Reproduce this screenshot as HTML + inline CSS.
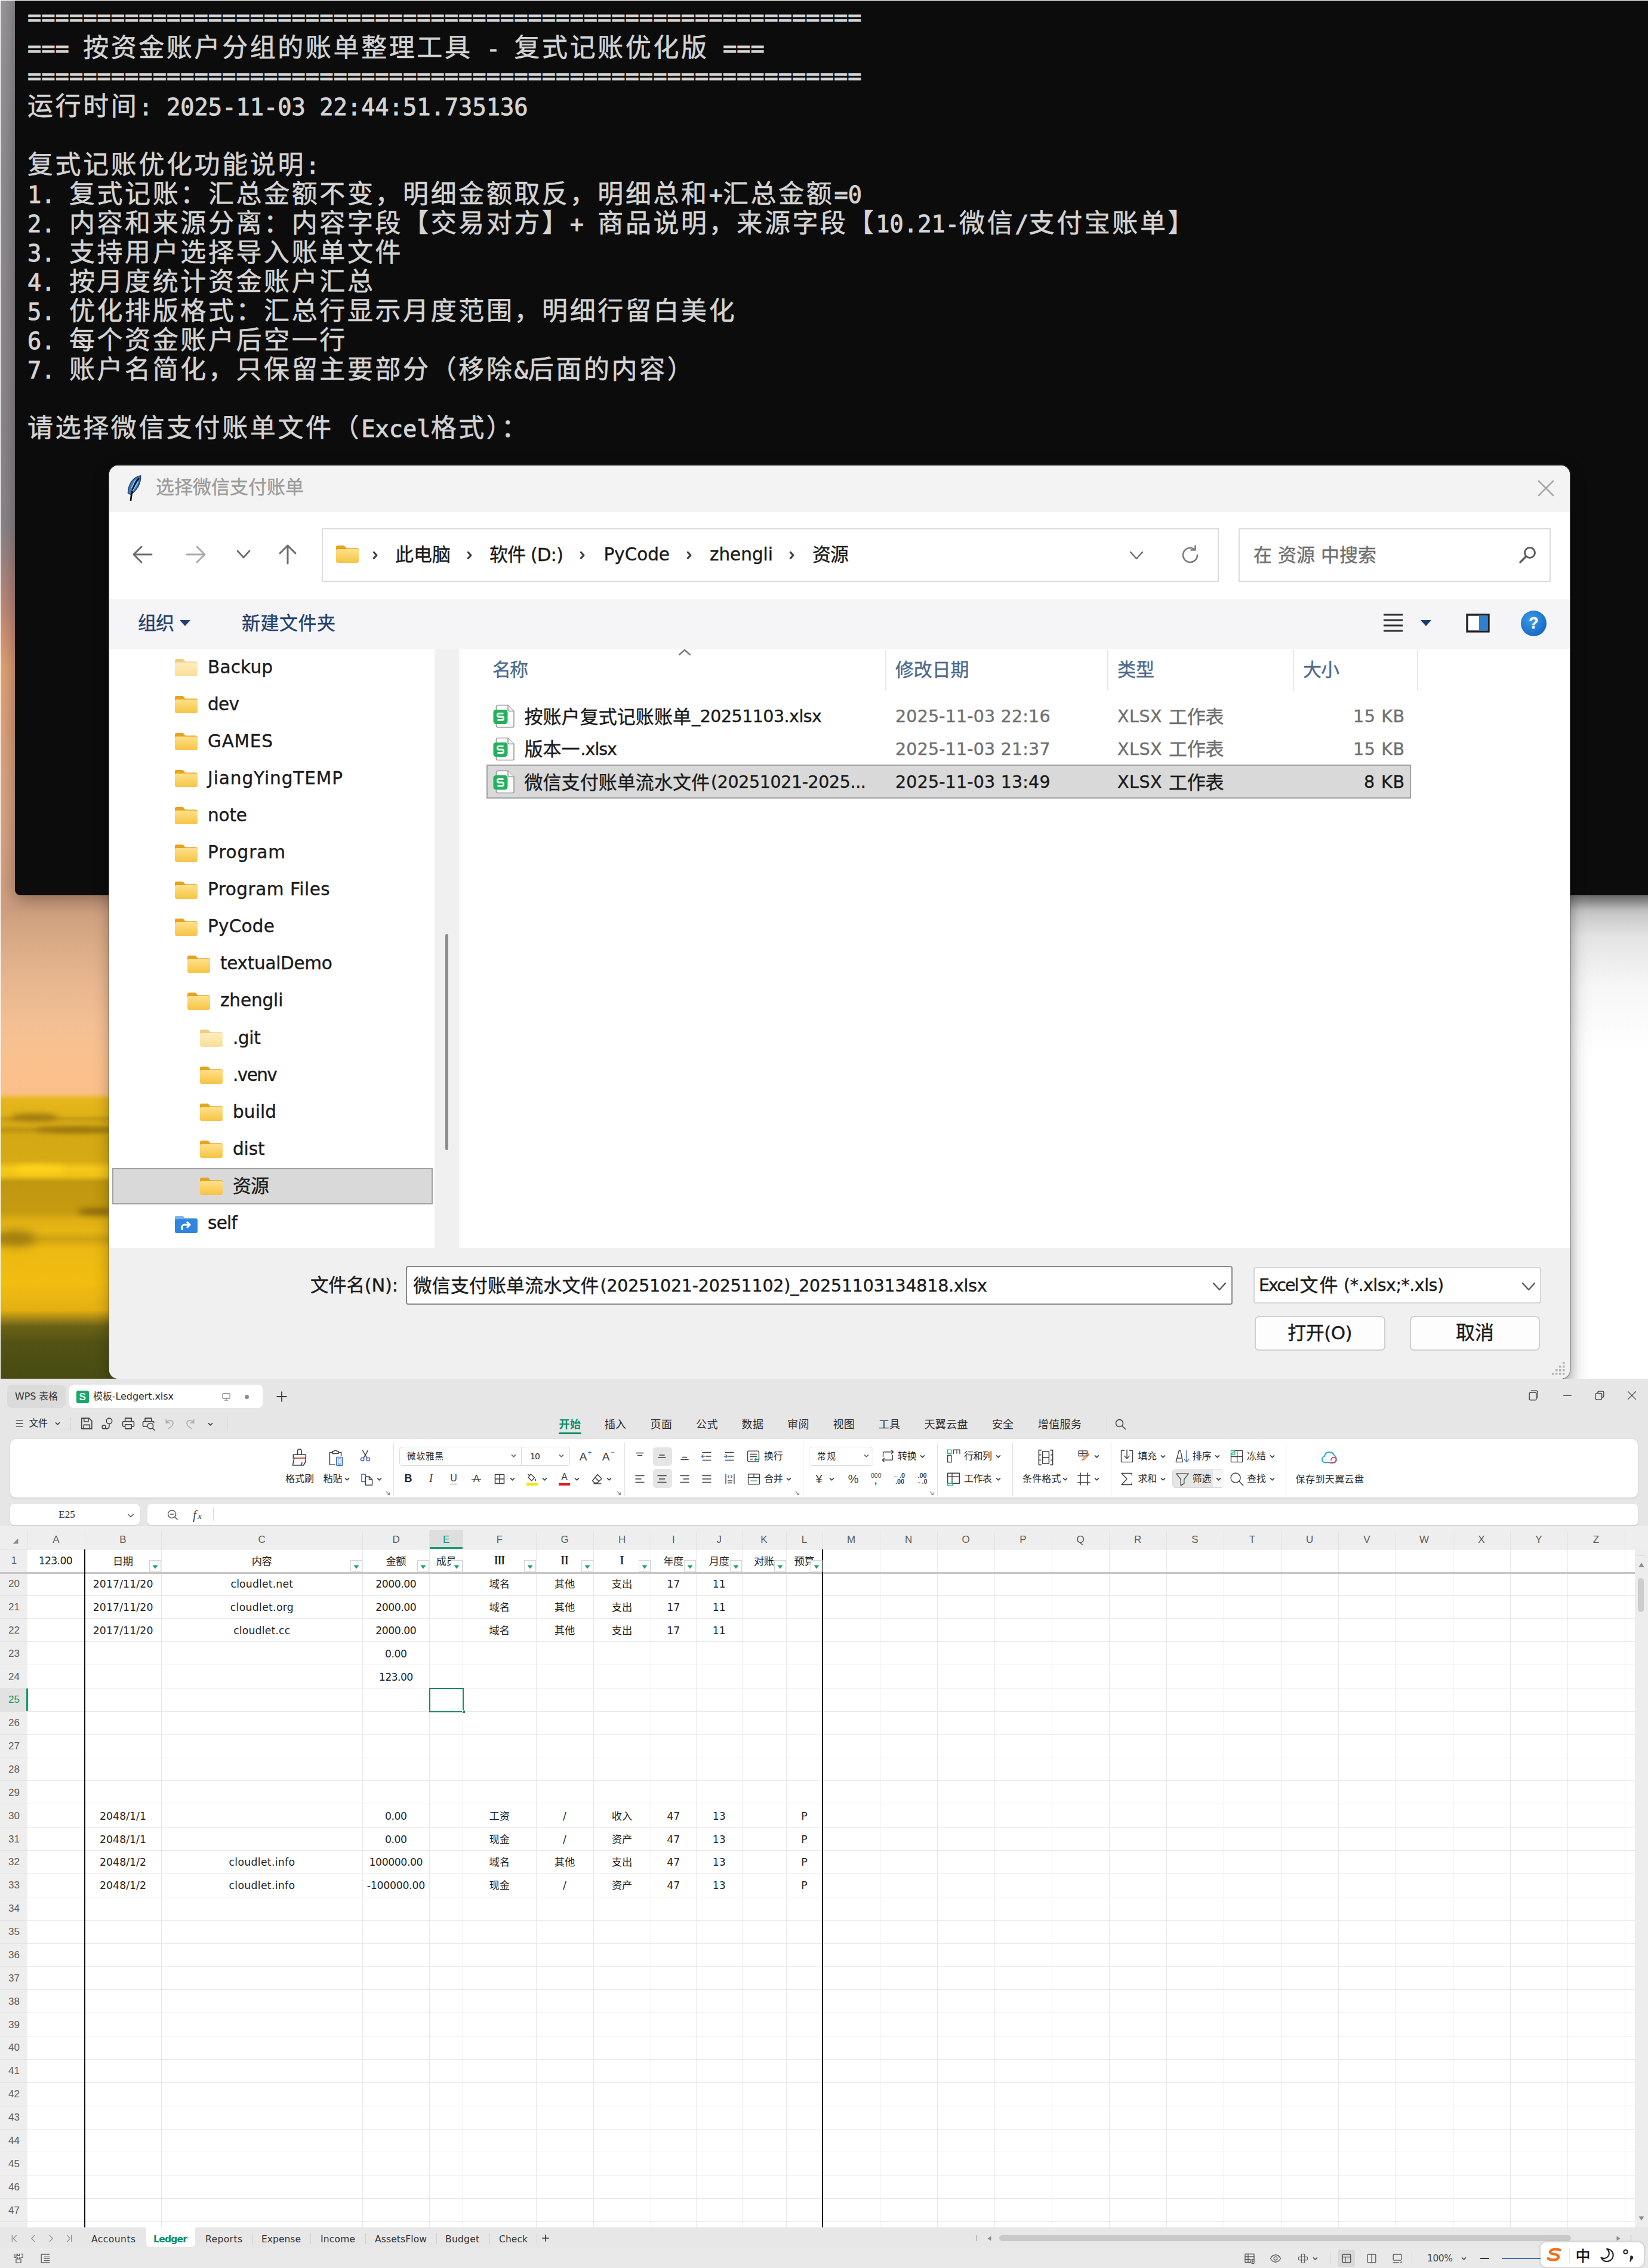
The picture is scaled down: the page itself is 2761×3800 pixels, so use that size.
<!DOCTYPE html><html lang="zh-CN"><head><meta charset="utf-8"><title>screenshot</title><style>html,body{margin:0;padding:0}body{width:2761px;height:3800px;position:relative;overflow:hidden;background:#fff;font-family:"DejaVu Sans","Liberation Sans","Noto Sans CJK SC",sans-serif}
.b{position:absolute;box-sizing:border-box}.t{position:absolute;white-space:pre;display:block}
.term{color:#d4d4d4;-webkit-text-stroke:0.9px #d4d4d4;font-family:"DejaVu Sans Mono","Liberation Mono","Noto Sans CJK SC",monospace;font-size:38.7px}
.tl{position:absolute;left:0;white-space:pre;height:49px;line-height:49px}
.tl i{font-style:normal;font-family:"Noto Sans CJK SC",sans-serif;font-size:43px;letter-spacing:3.6px;-webkit-text-stroke:0.55px #d4d4d4}
</style></head><body>
<div class="b" style="left:0px;top:0px;width:2761px;height:2311px;background:linear-gradient(to bottom,#9a969b 0px,#908c90 300px,#8b8589 880px,#a08581 940px,#b8877b 1000px,#d09275 1060px,#e2a373 1120px,#dea27a 1200px,#dba684 1350px,#d3a081 1480px,#cd9e7e 1520px,#d9ab86 1580px,#e8b78f 1650px,#f4bf92 1720px,#fac18e 1780px,#fbbf8a 1830px,#f3bd60 1836px,#e6b61c 1842px,#e0b218 1868px,#c89c14 1874px,#d8ac16 1884px,#c09410 1893px,#d2a814 1902px,#d6aa14 1945px,#f6c818 1958px,#f0c218 1970px,#c09810 1980px,#c49a10 2030px,#e0b014 2046px,#e6b614 2062px,#cfa212 2076px,#ecb912 2092px,#f1bd10 2150px,#e4b012 2195px,#a88a16 2208px,#6b6216 2222px,#525214 2250px,#484c10 2311px);"></div>
<div class="b" style="left:18px;top:1866px;width:80px;height:12px;background:#9c7810;border-radius:50%;filter:blur(5px)"></div>
<div class="b" style="left:60px;top:1888px;width:130px;height:10px;background:#96740e;border-radius:50%;filter:blur(4px)"></div>
<div class="b" style="left:130px;top:2024px;width:60px;height:12px;background:#8a6a0c;border-radius:50%;filter:blur(5px)"></div>
<div class="b" style="left:-10px;top:2062px;width:70px;height:26px;background:#a07e10;border-radius:50%;filter:blur(8px)"></div>
<div class="b" style="left:20px;top:1952px;width:90px;height:14px;background:#ffd41c;border-radius:50%;filter:blur(6px)"></div>
<div class="b" style="left:2620px;top:1500px;width:141px;height:811px;background:linear-gradient(to bottom,#8a8a8a 0px,#c4c4c4 25px,#e4e4e4 70px,#f6f6f6 150px,#ffffff 260px);"></div>
<div class="b" style="left:2620px;top:1500px;width:50px;height:811px;background:linear-gradient(to right,rgba(120,120,120,.30),rgba(200,200,200,.12) 25px,rgba(255,255,255,0) 50px);"></div>
<div class="b" style="left:25px;top:-20px;width:2756px;height:1520px;background:#0c0c0c;border-radius:9px;box-shadow:0 6px 30px rgba(0,0,0,.38);"></div>
<div class="b term" style="left:46px;top:0;width:2700px;height:760px"><div class="tl" style="top:4.7px">============================================================</div><div class="tl" style="top:51.5px">=== <i>按资金账户分组的账单整理工具</i> - <i>复式记账优化版</i> ===</div><div class="tl" style="top:102.7px">============================================================</div><div class="tl" style="top:149.5px"><i>运行时间</i>: 2025-11-03 22:44:51.735136</div><div class="tl" style="top:247.5px"><i>复式记账优化功能说明</i>:</div><div class="tl" style="top:296.5px">1. <i>复式记账：汇总金额不变，明细金额取反，明细总和</i>+<i>汇总金额</i>=0</div><div class="tl" style="top:345.5px">2. <i>内容和来源分离：内容字段【交易对方】</i>+ <i>商品说明，来源字段【</i>10.21-<i>微信</i>/<i>支付宝账单】</i></div><div class="tl" style="top:394.5px">3. <i>支持用户选择导入账单文件</i></div><div class="tl" style="top:443.5px">4. <i>按月度统计资金账户汇总</i></div><div class="tl" style="top:492.5px">5. <i>优化排版格式：汇总行显示月度范围，明细行留白美化</i></div><div class="tl" style="top:541.5px">6. <i>每个资金账户后空一行</i></div><div class="tl" style="top:590.5px">7. <i>账户名简化，只保留主要部分（移除</i>&amp;<i>后面的内容）</i></div><div class="tl" style="top:688.5px"><i>请选择微信支付账单文件（</i>Excel<i>格式）：</i></div></div>
<div class="b" style="left:183px;top:780px;width:2447px;height:1530px;border-radius:15px;background:#fff;box-shadow:0 0 0 1.5px rgba(90,90,90,.5),0 6px 26px rgba(0,0,0,.3);overflow:hidden">
<div class="b" style="left:0;top:0;width:2447px;height:78px;background:#f3f3f3"></div>
<div class="b" style="left:0;top:224px;width:2447px;height:84px;background:#f5f5f8"></div>
<div class="b" style="left:0;top:1311px;width:2447px;height:219px;background:#f0f0f0"></div>
<div class="b" style="left:545px;top:308px;width:41px;height:1003px;background:#f0f0f0"></div>
<div class="b" style="left:586px;top:308px;width:4px;height:1003px;background:#fbfbfb"></div>
</div>
<svg class="b" style="left:212px;top:795px;" width="26" height="46" viewBox="0 0 26 46"><path d="M23.500 2C12 4 3 15 2.500 31L7 33.500C17 27 24.500 15 23.500 2z" fill="#3d7fc6" stroke="#24406a" stroke-width="1.600"/><path d="M21 6C13 14 8.500 26 7 44" fill="none" stroke="#0b1424" stroke-width="2.800"/><path d="M15 9L8 23M19 13L10 28" stroke="#a9ccf0" stroke-width="1.400" fill="none"/></svg>
<span class="t" style="left:261.0px;top:795.0px;height:43px;line-height:43px;font-size:31px;color:#9b9b9b;-webkit-text-stroke:.4px;">选择微信支付账单</span>
<svg class="b" style="left:2576px;top:804px;" width="28" height="28" viewBox="0 0 28 28"><path d="M2 2L26 26M26 2L2 26" stroke="#a9a9a9" stroke-width="2.600" stroke-linecap="round"/></svg>
<svg class="b" style="left:221px;top:913px;" width="36" height="32" viewBox="0 0 36 32"><path d="M33 16H4M16 3L3 16L16 29" fill="none" stroke="#6c6c6c" stroke-width="3" stroke-linecap="round" stroke-linejoin="round"/></svg>
<svg class="b" style="left:310px;top:913px;" width="36" height="32" viewBox="0 0 36 32"><path d="M3 16H32M20 3L33 16L20 29" fill="none" stroke="#ababab" stroke-width="3" stroke-linecap="round" stroke-linejoin="round"/></svg>
<svg class="b" style="left:394.5px;top:919.5px;" width="26" height="17" viewBox="0 0 26 17"><path d="M3 3L13 14L23 3" fill="none" stroke="#6c6c6c" stroke-width="2.8" stroke-linecap="round" stroke-linejoin="round"/></svg>
<svg class="b" style="left:466px;top:911px;" width="32" height="36" viewBox="0 0 32 36"><path d="M16 33V4M3 16L16 3L29 16" fill="none" stroke="#6c6c6c" stroke-width="3" stroke-linecap="round" stroke-linejoin="round"/></svg>
<div class="b" style="left:539px;top:885px;width:1503px;height:90px;background:#fff;border:2px solid #dcdcdc;"></div>
<svg class="b" style="left:561px;top:911px;" width="42" height="34" viewBox="0 0 42 34"><linearGradient id="fg" x1="0" y1="0" x2="0" y2="1"><stop offset="0" stop-color="#ffe08a"/><stop offset="1" stop-color="#f6c443"/></linearGradient><path d="M2 6a3 3 0 0 1 3-3h10.5l4 4.5H37a3 3 0 0 1 3 3V12H2z" fill="#e5a320"/><path d="M2 11.5a2.5 2.5 0 0 1 2.5-2.5H37.500a2.500 2.500 0 0 1 2.500 2.500V29a3 3 0 0 1-3 3H5a3 3 0 0 1-3-3z" fill="url(#fg)"/></svg>
<svg class="b" style="left:624.4px;top:922.64px;" width="9.2" height="14.72" viewBox="0 0 9.2 14.72"><path d="M2.3 2.3L6.9 7.36L2.3 12.42" fill="none" stroke="#3f3f3f" stroke-width="3.1" stroke-linecap="round" stroke-linejoin="round"/></svg>
<span class="t" style="left:662.0px;top:907.5px;height:43px;line-height:43px;font-size:31px;color:#1b1b1b;-webkit-text-stroke:.4px;">此电脑</span>
<svg class="b" style="left:782.4px;top:922.64px;" width="9.2" height="14.72" viewBox="0 0 9.2 14.72"><path d="M2.3 2.3L6.9 7.36L2.3 12.42" fill="none" stroke="#3f3f3f" stroke-width="3.1" stroke-linecap="round" stroke-linejoin="round"/></svg>
<span class="t" style="left:820.0px;top:907.5px;height:43px;line-height:43px;font-size:31px;color:#1b1b1b;letter-spacing:-1.06px;-webkit-text-stroke:.4px;">软件 (D:)</span>
<svg class="b" style="left:971.4px;top:922.64px;" width="9.2" height="14.72" viewBox="0 0 9.2 14.72"><path d="M2.3 2.3L6.9 7.36L2.3 12.42" fill="none" stroke="#3f3f3f" stroke-width="3.1" stroke-linecap="round" stroke-linejoin="round"/></svg>
<span class="t" style="left:1011.5px;top:908.5px;height:41px;line-height:41px;font-size:29.5px;color:#1b1b1b;letter-spacing:-0.06px;-webkit-text-stroke:.4px;">PyCode</span>
<svg class="b" style="left:1150.4px;top:922.64px;" width="9.2" height="14.72" viewBox="0 0 9.2 14.72"><path d="M2.3 2.3L6.9 7.36L2.3 12.42" fill="none" stroke="#3f3f3f" stroke-width="3.1" stroke-linecap="round" stroke-linejoin="round"/></svg>
<span class="t" style="left:1189.0px;top:908.5px;height:41px;line-height:41px;font-size:29.5px;color:#1b1b1b;letter-spacing:-0.03px;-webkit-text-stroke:.4px;">zhengli</span>
<svg class="b" style="left:1322.4px;top:922.64px;" width="9.2" height="14.72" viewBox="0 0 9.2 14.72"><path d="M2.3 2.3L6.9 7.36L2.3 12.42" fill="none" stroke="#3f3f3f" stroke-width="3.1" stroke-linecap="round" stroke-linejoin="round"/></svg>
<span class="t" style="left:1361.0px;top:907.5px;height:43px;line-height:43px;font-size:31px;color:#1b1b1b;letter-spacing:-1.00px;-webkit-text-stroke:.4px;">资源</span>
<svg class="b" style="left:1891px;top:921.5px;" width="26" height="17" viewBox="0 0 26 17"><path d="M3 3L13 14L23 3" fill="none" stroke="#6c6c6c" stroke-width="2.4" stroke-linecap="round" stroke-linejoin="round"/></svg>
<svg class="b" style="left:1977px;top:913px;" width="34" height="34" viewBox="0 0 34 34"><path d="M29 17A12 12 0 1 1 24.500 7.600" fill="none" stroke="#7a7a7a" stroke-width="2.600" stroke-linecap="round"/><path d="M25.500 1.500V8.500H18.500" fill="none" stroke="#7a7a7a" stroke-width="2.600" stroke-linecap="round" stroke-linejoin="round"/></svg>
<div class="b" style="left:2075px;top:885px;width:523px;height:90px;background:#fff;border:2px solid #dcdcdc;"></div>
<span class="t" style="left:2100.0px;top:908.5px;height:43px;line-height:43px;font-size:31px;color:#6f6f6f;letter-spacing:0.04px;-webkit-text-stroke:.4px;">在 资源 中搜索</span>
<svg class="b" style="left:2543px;top:914px;" width="32" height="32" viewBox="0 0 32 32"><circle cx="20" cy="12" r="8.500" fill="none" stroke="#5c5c5c" stroke-width="3"/><path d="M13.500 18.500L4 28" stroke="#5c5c5c" stroke-width="3.400" stroke-linecap="round"/></svg>
<span class="t" style="left:231.0px;top:1022.5px;height:43px;line-height:43px;font-size:31px;color:#23406e;letter-spacing:-1.00px;-webkit-text-stroke:.4px;">组织</span>
<svg class="b" style="left:299px;top:1037px;" width="22" height="14" viewBox="0 0 22 14"><path d="M2 2H20L11 12z" fill="#23406e"/></svg>
<span class="t" style="left:405.0px;top:1022.5px;height:43px;line-height:43px;font-size:31px;color:#23406e;letter-spacing:0.50px;-webkit-text-stroke:.4px;">新建文件夹</span>
<svg class="b" style="left:2317px;top:1026px;" width="34" height="36" viewBox="0 0 34 36"><path d="M1 4H33M1 13H33M1 22H33M1 31H33" stroke="#333" stroke-width="3"/></svg>
<svg class="b" style="left:2378px;top:1037px;" width="22" height="14" viewBox="0 0 22 14"><path d="M2 2H20L11 12z" fill="#1d3a6a"/></svg>
<svg class="b" style="left:2456px;top:1028px;" width="40" height="32" viewBox="0 0 40 32"><rect x="2" y="2" width="36" height="28" fill="#fff" stroke="#222" stroke-width="3.400"/><rect x="22" y="3.500" width="14.500" height="25" fill="#2f80d0"/></svg>
<div class="b" style="left:2548px;top:1022.500px;width:43px;height:43px;border-radius:50%;background:radial-gradient(circle at 40% 35%,#3c9be8,#1769c4 75%)"></div>
<span class="t" style="left:2561.2px;top:1025.0px;height:38px;line-height:38px;font-size:27px;color:#fff;font-family:'Liberation Sans','Noto Sans CJK SC',sans-serif;font-weight:700;-webkit-text-stroke:.4px;">?</span>
<div class="b" style="left:188px;top:1957px;width:537px;height:61px;background:#d9d9d9;border:2px solid #a2a2a2;"></div>
<svg class="b" style="left:291px;top:1101px;opacity:.55;" width="42" height="34" viewBox="0 0 42 34"><linearGradient id="fg" x1="0" y1="0" x2="0" y2="1"><stop offset="0" stop-color="#ffe08a"/><stop offset="1" stop-color="#f6c443"/></linearGradient><path d="M2 6a3 3 0 0 1 3-3h10.5l4 4.5H37a3 3 0 0 1 3 3V12H2z" fill="#e5a320"/><path d="M2 11.5a2.5 2.5 0 0 1 2.5-2.5H37.500a2.500 2.500 0 0 1 2.500 2.500V29a3 3 0 0 1-3 3H5a3 3 0 0 1-3-3z" fill="url(#fg)"/></svg>
<span class="t" style="left:348.0px;top:1097.5px;height:41px;line-height:41px;font-size:29.5px;color:#1b1b1b;letter-spacing:0.17px;-webkit-text-stroke:.4px;">Backup</span>
<svg class="b" style="left:291px;top:1163.1px;" width="42" height="34" viewBox="0 0 42 34"><linearGradient id="fg" x1="0" y1="0" x2="0" y2="1"><stop offset="0" stop-color="#ffe08a"/><stop offset="1" stop-color="#f6c443"/></linearGradient><path d="M2 6a3 3 0 0 1 3-3h10.5l4 4.5H37a3 3 0 0 1 3 3V12H2z" fill="#e5a320"/><path d="M2 11.5a2.5 2.5 0 0 1 2.5-2.5H37.500a2.500 2.500 0 0 1 2.500 2.500V29a3 3 0 0 1-3 3H5a3 3 0 0 1-3-3z" fill="url(#fg)"/></svg>
<span class="t" style="left:348.0px;top:1159.6px;height:41px;line-height:41px;font-size:29.5px;color:#1b1b1b;letter-spacing:-0.67px;-webkit-text-stroke:.4px;">dev</span>
<svg class="b" style="left:291px;top:1225.2px;" width="42" height="34" viewBox="0 0 42 34"><linearGradient id="fg" x1="0" y1="0" x2="0" y2="1"><stop offset="0" stop-color="#ffe08a"/><stop offset="1" stop-color="#f6c443"/></linearGradient><path d="M2 6a3 3 0 0 1 3-3h10.5l4 4.5H37a3 3 0 0 1 3 3V12H2z" fill="#e5a320"/><path d="M2 11.5a2.5 2.5 0 0 1 2.5-2.5H37.500a2.500 2.500 0 0 1 2.500 2.500V29a3 3 0 0 1-3 3H5a3 3 0 0 1-3-3z" fill="url(#fg)"/></svg>
<span class="t" style="left:348.0px;top:1221.7px;height:41px;line-height:41px;font-size:29.5px;color:#1b1b1b;letter-spacing:0.79px;-webkit-text-stroke:.4px;">GAMES</span>
<svg class="b" style="left:291px;top:1287.3px;" width="42" height="34" viewBox="0 0 42 34"><linearGradient id="fg" x1="0" y1="0" x2="0" y2="1"><stop offset="0" stop-color="#ffe08a"/><stop offset="1" stop-color="#f6c443"/></linearGradient><path d="M2 6a3 3 0 0 1 3-3h10.5l4 4.5H37a3 3 0 0 1 3 3V12H2z" fill="#e5a320"/><path d="M2 11.5a2.5 2.5 0 0 1 2.5-2.5H37.500a2.500 2.500 0 0 1 2.500 2.500V29a3 3 0 0 1-3 3H5a3 3 0 0 1-3-3z" fill="url(#fg)"/></svg>
<span class="t" style="left:348.0px;top:1283.8px;height:41px;line-height:41px;font-size:29.5px;color:#1b1b1b;letter-spacing:0.93px;-webkit-text-stroke:.4px;">JiangYingTEMP</span>
<svg class="b" style="left:291px;top:1349.4px;" width="42" height="34" viewBox="0 0 42 34"><linearGradient id="fg" x1="0" y1="0" x2="0" y2="1"><stop offset="0" stop-color="#ffe08a"/><stop offset="1" stop-color="#f6c443"/></linearGradient><path d="M2 6a3 3 0 0 1 3-3h10.5l4 4.5H37a3 3 0 0 1 3 3V12H2z" fill="#e5a320"/><path d="M2 11.5a2.5 2.5 0 0 1 2.5-2.5H37.500a2.500 2.500 0 0 1 2.500 2.500V29a3 3 0 0 1-3 3H5a3 3 0 0 1-3-3z" fill="url(#fg)"/></svg>
<span class="t" style="left:348.0px;top:1345.9px;height:41px;line-height:41px;font-size:29.5px;color:#1b1b1b;letter-spacing:-0.16px;-webkit-text-stroke:.4px;">note</span>
<svg class="b" style="left:291px;top:1411.5px;" width="42" height="34" viewBox="0 0 42 34"><linearGradient id="fg" x1="0" y1="0" x2="0" y2="1"><stop offset="0" stop-color="#ffe08a"/><stop offset="1" stop-color="#f6c443"/></linearGradient><path d="M2 6a3 3 0 0 1 3-3h10.5l4 4.5H37a3 3 0 0 1 3 3V12H2z" fill="#e5a320"/><path d="M2 11.5a2.5 2.5 0 0 1 2.5-2.5H37.500a2.500 2.500 0 0 1 2.500 2.500V29a3 3 0 0 1-3 3H5a3 3 0 0 1-3-3z" fill="url(#fg)"/></svg>
<span class="t" style="left:348.0px;top:1408.0px;height:41px;line-height:41px;font-size:29.5px;color:#1b1b1b;letter-spacing:0.92px;-webkit-text-stroke:.4px;">Program</span>
<svg class="b" style="left:291px;top:1473.6px;" width="42" height="34" viewBox="0 0 42 34"><linearGradient id="fg" x1="0" y1="0" x2="0" y2="1"><stop offset="0" stop-color="#ffe08a"/><stop offset="1" stop-color="#f6c443"/></linearGradient><path d="M2 6a3 3 0 0 1 3-3h10.5l4 4.5H37a3 3 0 0 1 3 3V12H2z" fill="#e5a320"/><path d="M2 11.5a2.5 2.5 0 0 1 2.5-2.5H37.500a2.500 2.500 0 0 1 2.500 2.500V29a3 3 0 0 1-3 3H5a3 3 0 0 1-3-3z" fill="url(#fg)"/></svg>
<span class="t" style="left:348.0px;top:1470.1px;height:41px;line-height:41px;font-size:29.5px;color:#1b1b1b;letter-spacing:0.51px;-webkit-text-stroke:.4px;">Program Files</span>
<svg class="b" style="left:291px;top:1535.7px;" width="42" height="34" viewBox="0 0 42 34"><linearGradient id="fg" x1="0" y1="0" x2="0" y2="1"><stop offset="0" stop-color="#ffe08a"/><stop offset="1" stop-color="#f6c443"/></linearGradient><path d="M2 6a3 3 0 0 1 3-3h10.5l4 4.5H37a3 3 0 0 1 3 3V12H2z" fill="#e5a320"/><path d="M2 11.5a2.5 2.5 0 0 1 2.5-2.5H37.500a2.500 2.500 0 0 1 2.500 2.500V29a3 3 0 0 1-3 3H5a3 3 0 0 1-3-3z" fill="url(#fg)"/></svg>
<span class="t" style="left:348.0px;top:1532.2px;height:41px;line-height:41px;font-size:29.5px;color:#1b1b1b;letter-spacing:0.24px;-webkit-text-stroke:.4px;">PyCode</span>
<svg class="b" style="left:312px;top:1597.8px;" width="42" height="34" viewBox="0 0 42 34"><linearGradient id="fg" x1="0" y1="0" x2="0" y2="1"><stop offset="0" stop-color="#ffe08a"/><stop offset="1" stop-color="#f6c443"/></linearGradient><path d="M2 6a3 3 0 0 1 3-3h10.5l4 4.5H37a3 3 0 0 1 3 3V12H2z" fill="#e5a320"/><path d="M2 11.5a2.5 2.5 0 0 1 2.5-2.5H37.500a2.500 2.500 0 0 1 2.500 2.500V29a3 3 0 0 1-3 3H5a3 3 0 0 1-3-3z" fill="url(#fg)"/></svg>
<span class="t" style="left:369.0px;top:1594.3px;height:41px;line-height:41px;font-size:29.5px;color:#1b1b1b;letter-spacing:-0.30px;-webkit-text-stroke:.4px;">textualDemo</span>
<svg class="b" style="left:312px;top:1659.9px;" width="42" height="34" viewBox="0 0 42 34"><linearGradient id="fg" x1="0" y1="0" x2="0" y2="1"><stop offset="0" stop-color="#ffe08a"/><stop offset="1" stop-color="#f6c443"/></linearGradient><path d="M2 6a3 3 0 0 1 3-3h10.5l4 4.5H37a3 3 0 0 1 3 3V12H2z" fill="#e5a320"/><path d="M2 11.5a2.5 2.5 0 0 1 2.5-2.5H37.500a2.500 2.500 0 0 1 2.500 2.500V29a3 3 0 0 1-3 3H5a3 3 0 0 1-3-3z" fill="url(#fg)"/></svg>
<span class="t" style="left:369.0px;top:1656.4px;height:41px;line-height:41px;font-size:29.5px;color:#1b1b1b;letter-spacing:-0.13px;-webkit-text-stroke:.4px;">zhengli</span>
<svg class="b" style="left:333px;top:1722px;opacity:.55;" width="42" height="34" viewBox="0 0 42 34"><linearGradient id="fg" x1="0" y1="0" x2="0" y2="1"><stop offset="0" stop-color="#ffe08a"/><stop offset="1" stop-color="#f6c443"/></linearGradient><path d="M2 6a3 3 0 0 1 3-3h10.5l4 4.5H37a3 3 0 0 1 3 3V12H2z" fill="#e5a320"/><path d="M2 11.5a2.5 2.5 0 0 1 2.5-2.5H37.500a2.500 2.500 0 0 1 2.500 2.500V29a3 3 0 0 1-3 3H5a3 3 0 0 1-3-3z" fill="url(#fg)"/></svg>
<span class="t" style="left:390.0px;top:1718.5px;height:41px;line-height:41px;font-size:29.5px;color:#1b1b1b;letter-spacing:-0.39px;-webkit-text-stroke:.4px;">.git</span>
<svg class="b" style="left:333px;top:1784.1px;" width="42" height="34" viewBox="0 0 42 34"><linearGradient id="fg" x1="0" y1="0" x2="0" y2="1"><stop offset="0" stop-color="#ffe08a"/><stop offset="1" stop-color="#f6c443"/></linearGradient><path d="M2 6a3 3 0 0 1 3-3h10.5l4 4.5H37a3 3 0 0 1 3 3V12H2z" fill="#e5a320"/><path d="M2 11.5a2.5 2.5 0 0 1 2.5-2.5H37.500a2.500 2.500 0 0 1 2.500 2.500V29a3 3 0 0 1-3 3H5a3 3 0 0 1-3-3z" fill="url(#fg)"/></svg>
<span class="t" style="left:390.0px;top:1780.6px;height:41px;line-height:41px;font-size:29.5px;color:#1b1b1b;letter-spacing:-1.59px;-webkit-text-stroke:.4px;">.venv</span>
<svg class="b" style="left:333px;top:1846.2px;" width="42" height="34" viewBox="0 0 42 34"><linearGradient id="fg" x1="0" y1="0" x2="0" y2="1"><stop offset="0" stop-color="#ffe08a"/><stop offset="1" stop-color="#f6c443"/></linearGradient><path d="M2 6a3 3 0 0 1 3-3h10.5l4 4.5H37a3 3 0 0 1 3 3V12H2z" fill="#e5a320"/><path d="M2 11.5a2.5 2.5 0 0 1 2.5-2.5H37.500a2.500 2.500 0 0 1 2.500 2.500V29a3 3 0 0 1-3 3H5a3 3 0 0 1-3-3z" fill="url(#fg)"/></svg>
<span class="t" style="left:390.0px;top:1842.7px;height:41px;line-height:41px;font-size:29.5px;color:#1b1b1b;letter-spacing:0.11px;-webkit-text-stroke:.4px;">build</span>
<svg class="b" style="left:333px;top:1908.3px;" width="42" height="34" viewBox="0 0 42 34"><linearGradient id="fg" x1="0" y1="0" x2="0" y2="1"><stop offset="0" stop-color="#ffe08a"/><stop offset="1" stop-color="#f6c443"/></linearGradient><path d="M2 6a3 3 0 0 1 3-3h10.5l4 4.5H37a3 3 0 0 1 3 3V12H2z" fill="#e5a320"/><path d="M2 11.5a2.5 2.5 0 0 1 2.5-2.5H37.500a2.500 2.500 0 0 1 2.500 2.500V29a3 3 0 0 1-3 3H5a3 3 0 0 1-3-3z" fill="url(#fg)"/></svg>
<span class="t" style="left:390.0px;top:1904.8px;height:41px;line-height:41px;font-size:29.5px;color:#1b1b1b;letter-spacing:-0.12px;-webkit-text-stroke:.4px;">dist</span>
<svg class="b" style="left:333px;top:1970.4px;" width="42" height="34" viewBox="0 0 42 34"><linearGradient id="fg" x1="0" y1="0" x2="0" y2="1"><stop offset="0" stop-color="#ffe08a"/><stop offset="1" stop-color="#f6c443"/></linearGradient><path d="M2 6a3 3 0 0 1 3-3h10.5l4 4.5H37a3 3 0 0 1 3 3V12H2z" fill="#e5a320"/><path d="M2 11.5a2.5 2.5 0 0 1 2.5-2.5H37.500a2.500 2.500 0 0 1 2.500 2.500V29a3 3 0 0 1-3 3H5a3 3 0 0 1-3-3z" fill="url(#fg)"/></svg>
<span class="t" style="left:390.0px;top:1965.9px;height:43px;line-height:43px;font-size:31px;color:#1b1b1b;letter-spacing:-1.00px;-webkit-text-stroke:.4px;">资源</span>
<svg class="b" style="left:291px;top:2031.5px;" width="42" height="36" viewBox="0 0 42 36"><path d="M2 8a3 3 0 0 1 3-3h10l4 4h18a3 3 0 0 1 3 3v3H2z" fill="#7fb4e6"/><path d="M2 13a2.500 2.500 0 0 1 2.500-2.500h33A2.500 2.500 0 0 1 40 13v18a3 3 0 0 1-3 3H5a3 3 0 0 1-3-3z" fill="#2f86dc"/><path d="M14 29V24a4 4 0 0 1 4-4h8M22 15l5 5-5 5" fill="none" stroke="#fff" stroke-width="3"/></svg>
<span class="t" style="left:348.0px;top:2029.0px;height:41px;line-height:41px;font-size:29.5px;color:#1b1b1b;letter-spacing:-0.70px;-webkit-text-stroke:.4px;">self</span>
<div class="b" style="left:745.5px;top:1565px;width:5px;height:362px;background:#8c8c8c;border-radius:2.5px;"></div>
<span class="t" style="left:825.0px;top:1101.0px;height:43px;line-height:43px;font-size:31px;color:#4d6a8c;letter-spacing:-2.00px;-webkit-text-stroke:.4px;">名称</span>
<span class="t" style="left:1500.0px;top:1101.0px;height:43px;line-height:43px;font-size:31px;color:#4d6a8c;letter-spacing:-0.17px;-webkit-text-stroke:.4px;">修改日期</span>
<span class="t" style="left:1872.0px;top:1101.0px;height:43px;line-height:43px;font-size:31px;color:#4d6a8c;-webkit-text-stroke:.4px;">类型</span>
<span class="t" style="left:2183.0px;top:1101.0px;height:43px;line-height:43px;font-size:31px;color:#4d6a8c;letter-spacing:-1.00px;-webkit-text-stroke:.4px;">大小</span>
<svg class="b" style="left:1135px;top:1086px;" width="24" height="14" viewBox="0 0 24 14"><path d="M3 11L12 3L21 11" fill="none" stroke="#7a7a7a" stroke-width="2.400" stroke-linecap="round" stroke-linejoin="round"/></svg>
<div class="b" style="left:1483px;top:1089px;width:2px;height:68px;background:#e8e8e8;"></div>
<div class="b" style="left:1855px;top:1089px;width:2px;height:68px;background:#e8e8e8;"></div>
<div class="b" style="left:2166px;top:1089px;width:2px;height:68px;background:#e8e8e8;"></div>
<div class="b" style="left:2373.5px;top:1089px;width:2px;height:68px;background:#e8e8e8;"></div>
<div class="b" style="left:815px;top:1280.5px;width:1549px;height:57px;background:#d9d9d9;border:2px solid #a2a2a2;"></div>
<svg class="b" style="left:826px;top:1180px;" width="37" height="40" viewBox="0 0 37 40"><path d="M8 1.500h17l10 10V36a2.500 2.500 0 0 1-2.500 2.500H8A2.500 2.500 0 0 1 5.500 36V4A2.500 2.500 0 0 1 8 1.500z" fill="#fff" stroke="#9b9b9b" stroke-width="1.600"/><path d="M25 1.500v7.500a2.500 2.500 0 0 0 2.500 2.500H35" fill="#f2f2f2" stroke="#9b9b9b" stroke-width="1.600"/><rect x="0.500" y="9" width="24" height="24" rx="4.500" fill="#21b35c"/><path d="M17.500 15.500H9.500a2 2 0 0 0-2 2v1.500a2 2 0 0 0 2 2h6a2 2 0 0 1 2 2V24.500a2 2 0 0 1-2 2H7.500" fill="none" stroke="#fff" stroke-width="2.800"/></svg>
<span class="t" style="left:878.5px;top:1179.5px;height:43px;line-height:43px;font-size:31px;color:#1b1b1b;letter-spacing:0.06px;-webkit-text-stroke:.4px;">按账户复式记账账单</span>
<span class="t" style="left:1159.0px;top:1181.0px;height:40px;line-height:40px;font-size:28.5px;color:#1b1b1b;letter-spacing:-0.53px;-webkit-text-stroke:.4px;">_20251103.xlsx</span>
<span class="t" style="left:1500.0px;top:1181.0px;height:40px;line-height:40px;font-size:28.5px;color:#707070;letter-spacing:0.18px;-webkit-text-stroke:.4px;">2025-11-03 22:16</span>
<span class="t" style="left:1872.0px;top:1181.0px;height:40px;line-height:40px;font-size:28.5px;color:#707070;letter-spacing:0.49px;-webkit-text-stroke:.4px;">XLSX</span>
<span class="t" style="left:1958.0px;top:1179.5px;height:43px;line-height:43px;font-size:31px;color:#707070;letter-spacing:-0.25px;-webkit-text-stroke:.4px;">工作表</span>
<span class="t" style="left:2267.0px;top:1181.0px;height:40px;line-height:40px;font-size:28.5px;color:#707070;letter-spacing:0.61px;-webkit-text-stroke:.4px;">15 KB</span>
<svg class="b" style="left:826px;top:1234.5px;" width="37" height="40" viewBox="0 0 37 40"><path d="M8 1.500h17l10 10V36a2.500 2.500 0 0 1-2.500 2.500H8A2.500 2.500 0 0 1 5.500 36V4A2.500 2.500 0 0 1 8 1.500z" fill="#fff" stroke="#9b9b9b" stroke-width="1.600"/><path d="M25 1.500v7.500a2.500 2.500 0 0 0 2.500 2.500H35" fill="#f2f2f2" stroke="#9b9b9b" stroke-width="1.600"/><rect x="0.500" y="9" width="24" height="24" rx="4.500" fill="#21b35c"/><path d="M17.500 15.500H9.500a2 2 0 0 0-2 2v1.500a2 2 0 0 0 2 2h6a2 2 0 0 1 2 2V24.500a2 2 0 0 1-2 2H7.500" fill="none" stroke="#fff" stroke-width="2.800"/></svg>
<span class="t" style="left:878.5px;top:1234.0px;height:43px;line-height:43px;font-size:31px;color:#1b1b1b;-webkit-text-stroke:.4px;">版本一</span>
<span class="t" style="left:972.5px;top:1235.5px;height:40px;line-height:40px;font-size:28.5px;color:#1b1b1b;letter-spacing:-1.02px;-webkit-text-stroke:.4px;">.xlsx</span>
<span class="t" style="left:1500.0px;top:1235.5px;height:40px;line-height:40px;font-size:28.5px;color:#707070;letter-spacing:0.18px;-webkit-text-stroke:.4px;">2025-11-03 21:37</span>
<span class="t" style="left:1872.0px;top:1235.5px;height:40px;line-height:40px;font-size:28.5px;color:#707070;letter-spacing:0.49px;-webkit-text-stroke:.4px;">XLSX</span>
<span class="t" style="left:1958.0px;top:1234.0px;height:43px;line-height:43px;font-size:31px;color:#707070;letter-spacing:-0.25px;-webkit-text-stroke:.4px;">工作表</span>
<span class="t" style="left:2267.0px;top:1235.5px;height:40px;line-height:40px;font-size:28.5px;color:#707070;letter-spacing:0.61px;-webkit-text-stroke:.4px;">15 KB</span>
<svg class="b" style="left:826px;top:1290px;" width="37" height="40" viewBox="0 0 37 40"><path d="M8 1.500h17l10 10V36a2.500 2.500 0 0 1-2.500 2.500H8A2.500 2.500 0 0 1 5.500 36V4A2.500 2.500 0 0 1 8 1.500z" fill="#fff" stroke="#9b9b9b" stroke-width="1.600"/><path d="M25 1.500v7.500a2.500 2.500 0 0 0 2.500 2.500H35" fill="#f2f2f2" stroke="#9b9b9b" stroke-width="1.600"/><rect x="0.500" y="9" width="24" height="24" rx="4.500" fill="#21b35c"/><path d="M17.500 15.500H9.500a2 2 0 0 0-2 2v1.500a2 2 0 0 0 2 2h6a2 2 0 0 1 2 2V24.500a2 2 0 0 1-2 2H7.500" fill="none" stroke="#fff" stroke-width="2.800"/></svg>
<span class="t" style="left:878.5px;top:1289.5px;height:43px;line-height:43px;font-size:31px;color:#1b1b1b;letter-spacing:0.06px;-webkit-text-stroke:.4px;">微信支付账单流水文件</span>
<span class="t" style="left:1191.0px;top:1291.0px;height:40px;line-height:40px;font-size:28.5px;color:#1b1b1b;letter-spacing:-0.39px;-webkit-text-stroke:.4px;">(20251021-2025...</span>
<span class="t" style="left:1500.0px;top:1291.0px;height:40px;line-height:40px;font-size:28.5px;color:#1b1b1b;letter-spacing:0.18px;-webkit-text-stroke:.4px;">2025-11-03 13:49</span>
<span class="t" style="left:1872.0px;top:1291.0px;height:40px;line-height:40px;font-size:28.5px;color:#1b1b1b;letter-spacing:0.49px;-webkit-text-stroke:.4px;">XLSX</span>
<span class="t" style="left:1958.0px;top:1289.5px;height:43px;line-height:43px;font-size:31px;color:#1b1b1b;letter-spacing:-0.25px;-webkit-text-stroke:.4px;">工作表</span>
<span class="t" style="left:2285.0px;top:1291.0px;height:40px;line-height:40px;font-size:28.5px;color:#1b1b1b;letter-spacing:0.85px;-webkit-text-stroke:.4px;">8 KB</span>
<span class="t" style="left:520.0px;top:2132.0px;height:43px;line-height:43px;font-size:30.5px;color:#1b1b1b;letter-spacing:-0.23px;-webkit-text-stroke:.4px;">文件名(N):</span>
<div class="b" style="left:680px;top:2121px;width:1385px;height:65px;background:#fff;border:2px solid #8a8a8a;border-radius:4px;"></div>
<span class="t" style="left:692.5px;top:2133.0px;height:43px;line-height:43px;font-size:31px;color:#1b1b1b;letter-spacing:0.11px;-webkit-text-stroke:.4px;">微信支付账单流水文件</span>
<span class="t" style="left:1005.5px;top:2134.5px;height:40px;line-height:40px;font-size:28.5px;color:#1b1b1b;letter-spacing:-0.21px;-webkit-text-stroke:.4px;">(20251021-20251102)_20251103134818.xlsx</span>
<svg class="b" style="left:2030px;top:2146.5px;" width="26" height="17" viewBox="0 0 26 17"><path d="M3 3L13 14L23 3" fill="none" stroke="#5a5a5a" stroke-width="2.4" stroke-linecap="round" stroke-linejoin="round"/></svg>
<div class="b" style="left:2100px;top:2122.5px;width:482px;height:61px;background:#fff;border:2px solid #d6d6d6;border-radius:4px;"></div>
<span class="t" style="left:2109.0px;top:2133.5px;height:40px;line-height:40px;font-size:28.5px;color:#1b1b1b;letter-spacing:-2.00px;-webkit-text-stroke:.4px;">Excel</span>
<span class="t" style="left:2177.5px;top:2132.0px;height:43px;line-height:43px;font-size:31px;color:#1b1b1b;letter-spacing:2.00px;-webkit-text-stroke:.4px;">文件</span>
<span class="t" style="left:2242.5px;top:2133.5px;height:40px;line-height:40px;font-size:28.5px;color:#1b1b1b;letter-spacing:-0.51px;-webkit-text-stroke:.4px;"> (*.xlsx;*.xls)</span>
<svg class="b" style="left:2548px;top:2146.5px;" width="26" height="17" viewBox="0 0 26 17"><path d="M3 3L13 14L23 3" fill="none" stroke="#5a5a5a" stroke-width="2.4" stroke-linecap="round" stroke-linejoin="round"/></svg>
<div class="b" style="left:2102px;top:2205px;width:219px;height:58px;background:#fdfdfd;border:2px solid #d0d0d0;border-radius:7px;"></div>
<span class="t" style="left:2157.2px;top:2212.0px;height:43px;line-height:43px;font-size:31px;color:#1b1b1b;letter-spacing:-0.52px;-webkit-text-stroke:.4px;">打开(O)</span>
<div class="b" style="left:2361.5px;top:2205px;width:218.5px;height:58px;background:#fdfdfd;border:2px solid #d0d0d0;border-radius:7px;"></div>
<span class="t" style="left:2439.0px;top:2211.0px;height:45px;line-height:45px;font-size:32px;color:#1b1b1b;letter-spacing:-0.02px;-webkit-text-stroke:.4px;">取消</span>
<svg class="b" style="left:2600px;top:2282px;" width="24" height="24" viewBox="0 0 24 24"><rect x="18" y="0" width="3.500" height="3.500" fill="#b4b4b4"/><rect x="12" y="6" width="3.500" height="3.500" fill="#b4b4b4"/><rect x="18" y="6" width="3.500" height="3.500" fill="#b4b4b4"/><rect x="6" y="12" width="3.500" height="3.500" fill="#b4b4b4"/><rect x="12" y="12" width="3.500" height="3.500" fill="#b4b4b4"/><rect x="18" y="12" width="3.500" height="3.500" fill="#b4b4b4"/><rect x="0" y="18" width="3.500" height="3.500" fill="#b4b4b4"/><rect x="6" y="18" width="3.500" height="3.500" fill="#b4b4b4"/><rect x="12" y="18" width="3.500" height="3.500" fill="#b4b4b4"/><rect x="18" y="18" width="3.500" height="3.500" fill="#b4b4b4"/></svg>
<div class="b" style="left:0px;top:2310px;width:2761px;height:1490px;background:#e6e6e6;"></div>
<div class="b" style="left:11.5px;top:2320px;width:98.5px;height:39px;background:#dbdbdb;border-radius:8px;"></div>
<span class="t" style="left:25.0px;top:2329.0px;height:22px;line-height:22px;font-size:16px;color:#333;letter-spacing:-0.14px;">WPS 表格</span>
<div class="b" style="left:116px;top:2320px;width:324px;height:39px;background:#fff;border-radius:8px;"></div>
<div class="b" style="left:127.5px;top:2329.5px;width:21.5px;height:21.5px;background:#16a867;border-radius:3px;"></div>
<span class="t" style="left:132.6px;top:2328.5px;height:24px;line-height:24px;font-size:17px;color:#fff;font-family:'Liberation Sans','Noto Sans CJK SC',sans-serif;font-weight:700;">S</span>
<span class="t" style="left:156.0px;top:2329.0px;height:22px;line-height:22px;font-size:16px;color:#2a2a2a;letter-spacing:-0.08px;">模板-Ledgert.xlsx</span>
<svg class="b" style="left:370px;top:2331px;" width="18" height="18" viewBox="0 0 22 22" fill="none" stroke="#8a8a8a" stroke-width="1.5" stroke-linecap="round" stroke-linejoin="round"><rect x="3.500" y="4.500" width="15" height="10.500" rx="1.500"/><path d="M8 18.500H14M11 15V18.500"/></svg>
<div class="b" style="left:409.500px;top:2337px;width:7px;height:7px;border-radius:50%;background:#8d8d8d"></div>
<svg class="b" style="left:462px;top:2330px;" width="20" height="20" viewBox="0 0 22 22" fill="none" stroke="#3a3a3a" stroke-width="2" stroke-linecap="round" stroke-linejoin="round"><path d="M11 2.500V19.500M2.500 11H19.500"/></svg>
<svg class="b" style="left:2559px;top:2328px;" width="20" height="20" viewBox="0 0 22 22" fill="none" stroke="#444" stroke-width="1.5" stroke-linecap="round" stroke-linejoin="round"><rect x="3.500" y="5.500" width="13" height="14" rx="2.500"/><path d="M7 2.500H16.500A2.500 2.500 0 0 1 19 5V16"/></svg>
<svg class="b" style="left:2616px;top:2328px;" width="20" height="20" viewBox="0 0 22 22" fill="none" stroke="#444" stroke-width="1.5" stroke-linecap="round" stroke-linejoin="round"><path d="M4 11H18"/></svg>
<svg class="b" style="left:2670px;top:2328px;" width="20" height="20" viewBox="0 0 22 22" fill="none" stroke="#444" stroke-width="1.5" stroke-linecap="round" stroke-linejoin="round"><rect x="3.500" y="7" width="11.500" height="11.500" rx="2"/><path d="M7.500 7V5.500A2 2 0 0 1 9.500 3.500H16.500A2 2 0 0 1 18.500 5.500V12.500A2 2 0 0 1 16.500 14.500H15"/></svg>
<svg class="b" style="left:2724px;top:2328px;" width="20" height="20" viewBox="0 0 22 22" fill="none" stroke="#444" stroke-width="1.5" stroke-linecap="round" stroke-linejoin="round"><path d="M4 4L18 18M18 4L4 18"/></svg>
<svg class="b" style="left:23.5px;top:2376px;" width="18" height="18" viewBox="0 0 22 22" fill="none" stroke="#3f3f3f" stroke-width="1.6" stroke-linecap="round" stroke-linejoin="round"><path d="M4 5H17M4 11H17M4 17H17"/></svg>
<span class="t" style="left:48.5px;top:2374.0px;height:22px;line-height:22px;font-size:16px;color:#2b2b2b;letter-spacing:-0.52px;">文件</span>
<svg class="b" style="left:92px;top:2382px" width="9" height="7" viewBox="0 0 9 7"><path d="M1.500 1.800L4.500 4.800L7.500 1.800" fill="none" stroke="#444" stroke-width="1.700" stroke-linecap="round" stroke-linejoin="round"/></svg>
<div class="b" style="left:118px;top:2374px;width:1px;height:23px;background:#cfcfcf;"></div>
<svg class="b" style="left:132px;top:2372px;" width="26" height="26" viewBox="0 0 22 22" fill="none" stroke="#3f3f3f" stroke-width="1.3" stroke-linecap="round" stroke-linejoin="round"><path d="M4 3.500H14.500L18.500 7.500V18.500H4zM7.500 3.500V8.500H13.500V3.500M7 18.500V13H15.500V18.500"/></svg>
<svg class="b" style="left:167px;top:2372px;" width="26" height="26" viewBox="0 0 22 22" fill="none" stroke="#3f3f3f" stroke-width="1.3" stroke-linecap="round" stroke-linejoin="round"><circle cx="13.500" cy="7.500" r="4"/><path d="M13.500 11.500V15A3.500 3.500 0 0 1 10 18.500H8.500"/><circle cx="6" cy="16" r="2.500"/></svg>
<svg class="b" style="left:202px;top:2372px;" width="26" height="26" viewBox="0 0 22 22" fill="none" stroke="#3f3f3f" stroke-width="1.3" stroke-linecap="round" stroke-linejoin="round"><path d="M6.500 8V3.500H15.500V8M6.500 15.500H4.500A1.500 1.500 0 0 1 3 14V9.500A1.500 1.500 0 0 1 4.500 8H17.500A1.500 1.500 0 0 1 19 9.500V14A1.500 1.500 0 0 1 17.500 15.500H15.500M6.500 12.500H15.500V18.500H6.500z"/></svg>
<svg class="b" style="left:236px;top:2372px;" width="26" height="26" viewBox="0 0 22 22" fill="none" stroke="#3f3f3f" stroke-width="1.3" stroke-linecap="round" stroke-linejoin="round"><path d="M6 8V3.500H15V8M8 15.500H4.500A1.500 1.500 0 0 1 3 14V9.500A1.500 1.500 0 0 1 4.500 8H17A1.500 1.500 0 0 1 18.500 9.500V10"/><circle cx="13.500" cy="14.500" r="4"/><path d="M16.500 17.500L19.500 20.500"/></svg>
<svg class="b" style="left:272.5px;top:2373.5px;" width="23" height="23" viewBox="0 0 22 22" fill="none" stroke="#a9a9a9" stroke-width="1.5" stroke-linecap="round" stroke-linejoin="round"><path d="M5 4V9.500H10.500M5.500 9C8 5 14 4.500 16 8.500C17.500 12 14 15.500 9 18.500"/></svg>
<svg class="b" style="left:307px;top:2373.5px;" width="23" height="23" viewBox="0 0 22 22" fill="none" stroke="#a9a9a9" stroke-width="1.5" stroke-linecap="round" stroke-linejoin="round"><path d="M17 4V9.500H11.500M16.500 9C14 5 8 4.500 6 8.500C4.500 12 8 15.500 13 18.500"/></svg>
<svg class="b" style="left:348px;top:2382.5px" width="9" height="7" viewBox="0 0 9 7"><path d="M1.500 1.800L4.500 4.800L7.500 1.800" fill="none" stroke="#444" stroke-width="1.700" stroke-linecap="round" stroke-linejoin="round"/></svg>
<div class="b" style="left:380px;top:2374px;width:1px;height:23px;background:#cfcfcf;"></div>
<span class="t" style="left:936.6px;top:2373.5px;height:25px;line-height:25px;font-size:18px;color:#0a8f6a;font-weight:700;letter-spacing:0.40px;">开始</span>
<div class="b" style="left:935.6px;top:2400px;width:38.4px;height:3px;background:#0a8f6a;border-radius:1.5px;"></div>
<span class="t" style="left:1013.0px;top:2373.5px;height:25px;line-height:25px;font-size:18px;color:#2d2d2d;">插入</span>
<span class="t" style="left:1089.5px;top:2373.5px;height:25px;line-height:25px;font-size:18px;color:#2d2d2d;letter-spacing:0.50px;">页面</span>
<span class="t" style="left:1166.0px;top:2373.5px;height:25px;line-height:25px;font-size:18px;color:#2d2d2d;letter-spacing:0.50px;">公式</span>
<span class="t" style="left:1242.5px;top:2373.5px;height:25px;line-height:25px;font-size:18px;color:#2d2d2d;letter-spacing:0.50px;">数据</span>
<span class="t" style="left:1319.0px;top:2373.5px;height:25px;line-height:25px;font-size:18px;color:#2d2d2d;letter-spacing:0.50px;">审阅</span>
<span class="t" style="left:1395.6px;top:2373.5px;height:25px;line-height:25px;font-size:18px;color:#2d2d2d;letter-spacing:0.10px;">视图</span>
<span class="t" style="left:1472.0px;top:2373.5px;height:25px;line-height:25px;font-size:18px;color:#2d2d2d;">工具</span>
<span class="t" style="left:1548.5px;top:2373.5px;height:25px;line-height:25px;font-size:18px;color:#2d2d2d;letter-spacing:0.37px;">天翼云盘</span>
<span class="t" style="left:1662.0px;top:2373.5px;height:25px;line-height:25px;font-size:18px;color:#2d2d2d;">安全</span>
<span class="t" style="left:1738.8px;top:2373.5px;height:25px;line-height:25px;font-size:18px;color:#2d2d2d;letter-spacing:0.40px;">增值服务</span>
<div class="b" style="left:1853.5px;top:2372px;width:1px;height:27px;background:#cfcfcf;"></div>
<svg class="b" style="left:1866px;top:2375px;" width="22" height="22" viewBox="0 0 22 22" fill="none" stroke="#3f3f3f" stroke-width="1.5" stroke-linecap="round" stroke-linejoin="round"><circle cx="9.500" cy="9.500" r="6"/><path d="M14 14L19.500 19.500"/></svg>
<div class="b" style="left:17px;top:2411px;width:2727px;height:98px;background:#fff;border-radius:10px;box-shadow:0 1px 3px rgba(0,0,0,.12)"></div>
<svg class="b" style="left:484.5px;top:2425px;" width="33" height="33" viewBox="0 0 22 22" fill="none" stroke="#3f3f3f" stroke-width="1.05" stroke-linecap="round" stroke-linejoin="round"><path d="M9 8.200V4.200A2.200 2.200 0 0 1 13.400 4.200V8.200M4.200 8.200H18.200V12H4.200z"/><path d="M4.500 12H18" stroke="#e0553a"/><path d="M5.200 12.200L3.600 20H15.500C17.800 17.500 18.600 15 18 12.200M12.500 20C13.500 19 14 18 14 17"/></svg>
<span class="t" style="left:478.0px;top:2466.6px;height:22px;line-height:22px;font-size:16px;color:#2b2b2b;letter-spacing:-0.01px;">格式刷</span>
<svg class="b" style="left:546px;top:2425.5px;" width="32" height="32" viewBox="0 0 22 22" fill="none" stroke="#3f3f3f" stroke-width="1.05" stroke-linecap="round" stroke-linejoin="round"><path d="M7.300 5.200H4.400V19.400H10.600M14.800 5.200H17.600V9M7.600 3.800H9.500A1.600 1.600 0 0 1 12.500 3.800H14.400V6.600H7.600z"/><rect x="12.200" y="10.600" width="7" height="9.600" rx="0.800" stroke="#3b6fd0"/><rect x="14" y="12.300" width="3.400" height="6.200" stroke="#3b6fd0" stroke-width="0.700"/></svg>
<span class="t" style="left:541.6px;top:2466.6px;height:22px;line-height:22px;font-size:16px;color:#2b2b2b;letter-spacing:-0.02px;">粘贴</span>
<svg class="b" style="left:576.5px;top:2474.6px" width="9" height="7" viewBox="0 0 9 7"><path d="M1.500 1.800L4.500 4.800L7.500 1.800" fill="none" stroke="#444" stroke-width="1.700" stroke-linecap="round" stroke-linejoin="round"/></svg>
<svg class="b" style="left:600px;top:2427px;" width="24" height="24" viewBox="0 0 22 22" fill="none" stroke="#3f3f3f" stroke-width="1.35" stroke-linecap="round" stroke-linejoin="round"><path d="M7 3L13.600 14.500M15 3L8.400 14.500"/><circle cx="6.600" cy="16.600" r="2.500" stroke="#3b62c4"/><circle cx="15.400" cy="16.600" r="2.500" stroke="#3b62c4"/></svg>
<svg class="b" style="left:602.2px;top:2465.6px;" width="25" height="25" viewBox="0 0 22 22" fill="none" stroke="#3f3f3f" stroke-width="1.3" stroke-linecap="round" stroke-linejoin="round"><path d="M9 6V3.500H3.500V14.500H9" stroke="#3b62c4"/><path d="M9 7H14.500L19 11.500V19.500H9z"/><path d="M14.500 7V11.500H19"/></svg>
<svg class="b" style="left:630.5px;top:2474.6px" width="9" height="7" viewBox="0 0 9 7"><path d="M1.500 1.800L4.500 4.800L7.500 1.800" fill="none" stroke="#444" stroke-width="1.700" stroke-linecap="round" stroke-linejoin="round"/></svg>
<svg class="b" style="left:646px;top:2498px" width="8" height="8" viewBox="0 0 8 8"><path d="M1 1L6.500 6.500M6.500 2.500V6.500H2.500" fill="none" stroke="#8a8a8a" stroke-width="1.200"/></svg>
<div class="b" style="left:658.5px;top:2417px;width:1px;height:89px;background:#e2e2e2;"></div>
<div class="b" style="left:669px;top:2424px;width:286px;height:31.5px;background:#fff;border:1px solid #dcdcdc;border-radius:5px;"></div>
<div class="b" style="left:873px;top:2425px;width:1px;height:29.5px;background:#dcdcdc;"></div>
<span class="t" style="left:682.0px;top:2429.5px;height:20px;line-height:20px;font-size:14.5px;color:#2b2b2b;letter-spacing:1.00px;">微软雅黑</span>
<svg class="b" style="left:855.5px;top:2436px" width="9" height="7" viewBox="0 0 9 7"><path d="M1.500 1.800L4.500 4.800L7.500 1.800" fill="none" stroke="#666" stroke-width="1.700" stroke-linecap="round" stroke-linejoin="round"/></svg>
<span class="t" style="left:888.0px;top:2429.5px;height:20px;line-height:20px;font-size:14px;color:#2b2b2b;letter-spacing:-0.83px;">10</span>
<svg class="b" style="left:935.5px;top:2436px" width="9" height="7" viewBox="0 0 9 7"><path d="M1.500 1.800L4.500 4.800L7.500 1.800" fill="none" stroke="#666" stroke-width="1.700" stroke-linecap="round" stroke-linejoin="round"/></svg>
<span class="t" style="left:970.7px;top:2427.0px;height:27px;line-height:27px;font-size:19px;color:#3f3f3f;font-family:'Liberation Sans','Noto Sans CJK SC',sans-serif;">A</span>
<span class="t" style="left:984.5px;top:2426.0px;height:17px;line-height:17px;font-size:12px;color:#2a6fc9;font-family:'Liberation Sans','Noto Sans CJK SC',sans-serif;">+</span>
<span class="t" style="left:1008.7px;top:2427.0px;height:27px;line-height:27px;font-size:19px;color:#3f3f3f;font-family:'Liberation Sans','Noto Sans CJK SC',sans-serif;">A</span>
<span class="t" style="left:1022.5px;top:2425.0px;height:17px;line-height:17px;font-size:12px;color:#2a6fc9;font-family:'Liberation Sans','Noto Sans CJK SC',sans-serif;">−</span>
<span class="t" style="left:677.5px;top:2465.1px;height:25px;line-height:25px;font-size:18px;color:#222;font-family:'Liberation Sans','Noto Sans CJK SC',sans-serif;font-weight:700;">B</span>
<span class="t" style="left:719.0px;top:2465.1px;height:25px;line-height:25px;font-size:18px;color:#3f3f3f;font-family:'Liberation Serif','Noto Serif CJK SC',serif;font-style:italic;">I</span>
<span class="t" style="left:754.2px;top:2465.6px;height:22px;line-height:22px;font-size:16px;color:#3f3f3f;font-family:'Liberation Sans','Noto Sans CJK SC',sans-serif;">U</span>
<div class="b" style="left:754px;top:2486px;width:12px;height:1.4px;background:#3f3f3f;"></div>
<span class="t" style="left:792.7px;top:2466.6px;height:22px;line-height:22px;font-size:16px;color:#3f3f3f;font-family:'Liberation Sans','Noto Sans CJK SC',sans-serif;">A</span>
<div class="b" style="left:790px;top:2478px;width:16px;height:1.3px;background:#3f3f3f;"></div>
<svg class="b" style="left:826px;top:2466.6px;" width="22" height="22" viewBox="0 0 22 22" fill="none" stroke="#3f3f3f" stroke-width="1.5" stroke-linecap="round" stroke-linejoin="round"><rect x="3.500" y="3.500" width="15" height="15"/><path d="M11 3.500V18.500M3.500 11H18.500"/></svg>
<svg class="b" style="left:854px;top:2474.6px" width="9" height="7" viewBox="0 0 9 7"><path d="M1.500 1.800L4.500 4.800L7.500 1.800" fill="none" stroke="#444" stroke-width="1.700" stroke-linecap="round" stroke-linejoin="round"/></svg>
<svg class="b" style="left:881px;top:2465.6px;" width="20" height="20" viewBox="0 0 22 22" fill="none" stroke="#3f3f3f" stroke-width="1.5" stroke-linecap="round" stroke-linejoin="round"><path d="M9 4L16 11L10.500 16.500L4.500 10.500zM6 6.500L4 4.500M17.500 13.500C18.500 15 18.500 16 17.500 16.500"/></svg>
<div class="b" style="left:881.5px;top:2485px;width:19px;height:4px;background:#f5e600;"></div>
<svg class="b" style="left:907.5px;top:2474.6px" width="9" height="7" viewBox="0 0 9 7"><path d="M1.500 1.800L4.500 4.800L7.500 1.800" fill="none" stroke="#444" stroke-width="1.700" stroke-linecap="round" stroke-linejoin="round"/></svg>
<span class="t" style="left:940.2px;top:2464.1px;height:22px;line-height:22px;font-size:16px;color:#3f3f3f;font-family:'Liberation Sans','Noto Sans CJK SC',sans-serif;">A</span>
<div class="b" style="left:936px;top:2485px;width:19px;height:4px;background:#e01e1e;"></div>
<svg class="b" style="left:961.5px;top:2474.6px" width="9" height="7" viewBox="0 0 9 7"><path d="M1.500 1.800L4.500 4.800L7.500 1.800" fill="none" stroke="#444" stroke-width="1.700" stroke-linecap="round" stroke-linejoin="round"/></svg>
<svg class="b" style="left:988.5px;top:2466.6px;" width="22" height="22" viewBox="0 0 22 22" fill="none" stroke="#3f3f3f" stroke-width="1.5" stroke-linecap="round" stroke-linejoin="round"><path d="M12 3.500L19 10.500L12 17.500H7L3.500 14zM7.500 8L14 14.500M6 19H18"/></svg>
<svg class="b" style="left:1015.5px;top:2474.6px" width="9" height="7" viewBox="0 0 9 7"><path d="M1.500 1.800L4.500 4.800L7.500 1.800" fill="none" stroke="#444" stroke-width="1.700" stroke-linecap="round" stroke-linejoin="round"/></svg>
<svg class="b" style="left:1033px;top:2498px" width="8" height="8" viewBox="0 0 8 8"><path d="M1 1L6.500 6.500M6.500 2.500V6.500H2.500" fill="none" stroke="#8a8a8a" stroke-width="1.200"/></svg>
<div class="b" style="left:1046px;top:2417px;width:1px;height:89px;background:#e2e2e2;"></div>
<div class="b" style="left:1094px;top:2424.5px;width:31.6px;height:31px;background:#e5e5e5;border-radius:5px;"></div>
<div class="b" style="left:1094px;top:2461.4px;width:31.6px;height:31.6px;background:#e5e5e5;border-radius:5px;"></div>
<svg class="b" style="left:1060.7px;top:2428.5px;" width="22" height="22" viewBox="0 0 22 22" fill="none" stroke="#3f3f3f" stroke-width="1.5" stroke-linecap="round" stroke-linejoin="round"><path d="M5 5.500H17M7.500 9.500H14.500"/></svg>
<svg class="b" style="left:1098px;top:2428.5px;" width="22" height="22" viewBox="0 0 22 22" fill="none" stroke="#3f3f3f" stroke-width="1.5" stroke-linecap="round" stroke-linejoin="round"><path d="M7 9H15M5 13H17"/></svg>
<svg class="b" style="left:1136px;top:2428.5px;" width="22" height="22" viewBox="0 0 22 22" fill="none" stroke="#3f3f3f" stroke-width="1.5" stroke-linecap="round" stroke-linejoin="round"><path d="M7.500 12.500H14.500M5 16.500H17"/></svg>
<svg class="b" style="left:1173px;top:2428.5px;" width="22" height="22" viewBox="0 0 22 22" fill="none" stroke="#3f3f3f" stroke-width="1.3" stroke-linecap="round" stroke-linejoin="round"><path d="M4 4.500H18M9.500 11H18M4 17.500H18" /><path d="M7.500 11H3M5 8.500L2.500 11L5 13.500" stroke="#2a6fc9"/></svg>
<svg class="b" style="left:1210.7px;top:2428.5px;" width="22" height="22" viewBox="0 0 22 22" fill="none" stroke="#3f3f3f" stroke-width="1.3" stroke-linecap="round" stroke-linejoin="round"><path d="M4 4.500H18M9.500 11H18M4 17.500H18"/><path d="M2.500 11H7M5 8.500L7.500 11L5 13.500" stroke="#2a6fc9"/></svg>
<svg class="b" style="left:1248.6px;top:2426.5px;" width="26" height="26" viewBox="0 0 22 22" fill="none" stroke="#3f3f3f" stroke-width="1.15" stroke-linecap="round" stroke-linejoin="round"><rect x="3" y="3.500" width="16" height="15" rx="1.500"/><path d="M6.500 8H15.500M6.500 11.500H15.500M6.500 15H10"/><path d="M19 12V15.500H13.500M15 13.500L13 15.500L15 17.500" stroke="#0f9d6c"/></svg>
<span class="t" style="left:1280.0px;top:2428.5px;height:22px;line-height:22px;font-size:16px;color:#2b2b2b;letter-spacing:-0.32px;">换行</span>
<svg class="b" style="left:1060.7px;top:2466.6px;" width="22" height="22" viewBox="0 0 22 22" fill="none" stroke="#3f3f3f" stroke-width="1.5" stroke-linecap="round" stroke-linejoin="round"><path d="M4 5.500H18M4 11H13M4 16.500H18"/></svg>
<svg class="b" style="left:1098px;top:2466.6px;" width="22" height="22" viewBox="0 0 22 22" fill="none" stroke="#3f3f3f" stroke-width="1.5" stroke-linecap="round" stroke-linejoin="round"><path d="M4 5.500H18M6.500 11H15.500M4 16.500H18"/></svg>
<svg class="b" style="left:1136px;top:2466.6px;" width="22" height="22" viewBox="0 0 22 22" fill="none" stroke="#3f3f3f" stroke-width="1.5" stroke-linecap="round" stroke-linejoin="round"><path d="M4 5.500H18M9 11H18M4 16.500H18"/></svg>
<svg class="b" style="left:1173px;top:2466.6px;" width="22" height="22" viewBox="0 0 22 22" fill="none" stroke="#3f3f3f" stroke-width="1.5" stroke-linecap="round" stroke-linejoin="round"><path d="M4 5.500H18M4 11H18M4 16.500H18"/></svg>
<svg class="b" style="left:1211.5px;top:2466.6px;" width="22" height="22" viewBox="0 0 22 22" fill="none" stroke="#3f3f3f" stroke-width="1.3" stroke-linecap="round" stroke-linejoin="round"><path d="M4 3V19M18 3V19M7.500 14H14.500M7.500 17.500H14.500"/><path d="M9.500 5L7.500 7L9.500 9M12.500 5L14.500 7L12.500 9" stroke="#2a6fc9"/></svg>
<svg class="b" style="left:1250px;top:2464.6px;" width="26" height="26" viewBox="0 0 22 22" fill="none" stroke="#3f3f3f" stroke-width="1.15" stroke-linecap="round" stroke-linejoin="round"><rect x="3" y="4" width="16" height="14.500" rx="1"/><path d="M3 9H19M11 4V9"/><path d="M6.500 13.700H15.500" stroke="#0f9d6c"/></svg>
<span class="t" style="left:1280.0px;top:2466.6px;height:22px;line-height:22px;font-size:16px;color:#2b2b2b;letter-spacing:-0.32px;">合并</span>
<svg class="b" style="left:1316.5px;top:2474.6px" width="9" height="7" viewBox="0 0 9 7"><path d="M1.500 1.800L4.500 4.800L7.500 1.800" fill="none" stroke="#444" stroke-width="1.700" stroke-linecap="round" stroke-linejoin="round"/></svg>
<svg class="b" style="left:1332px;top:2498px" width="8" height="8" viewBox="0 0 8 8"><path d="M1 1L6.500 6.500M6.500 2.500V6.500H2.500" fill="none" stroke="#8a8a8a" stroke-width="1.200"/></svg>
<div class="b" style="left:1345px;top:2417px;width:1px;height:89px;background:#e2e2e2;"></div>
<div class="b" style="left:1355px;top:2424px;width:107.7px;height:31.5px;background:#fff;border:1px solid #dcdcdc;border-radius:5px;"></div>
<span class="t" style="left:1369.0px;top:2429.5px;height:20px;line-height:20px;font-size:14.5px;color:#2b2b2b;letter-spacing:2.00px;">常规</span>
<svg class="b" style="left:1447.2px;top:2436px" width="9" height="7" viewBox="0 0 9 7"><path d="M1.500 1.800L4.500 4.800L7.500 1.800" fill="none" stroke="#666" stroke-width="1.700" stroke-linecap="round" stroke-linejoin="round"/></svg>
<svg class="b" style="left:1473.5px;top:2426px;" width="27" height="27" viewBox="0 0 22 22" fill="none" stroke="#3f3f3f" stroke-width="1.1" stroke-linecap="round" stroke-linejoin="round"><path d="M4.500 12V7A1.500 1.500 0 0 1 6 5.500H18.500M16 3L18.500 5.500L16 8M17.500 10V15A1.500 1.500 0 0 1 16 16.500H3.500M6 14L3.500 16.500L6 19"/></svg>
<span class="t" style="left:1504.0px;top:2428.5px;height:22px;line-height:22px;font-size:16px;color:#2b2b2b;letter-spacing:-0.22px;">转换</span>
<svg class="b" style="left:1541px;top:2436.5px" width="9" height="7" viewBox="0 0 9 7"><path d="M1.500 1.800L4.500 4.800L7.500 1.800" fill="none" stroke="#444" stroke-width="1.700" stroke-linecap="round" stroke-linejoin="round"/></svg>
<span class="t" style="left:1366.4px;top:2463.6px;height:28px;line-height:28px;font-size:20px;color:#3f3f3f;font-family:'Liberation Sans','Noto Sans CJK SC',sans-serif;">¥</span>
<svg class="b" style="left:1389px;top:2474.6px" width="9" height="7" viewBox="0 0 9 7"><path d="M1.500 1.800L4.500 4.800L7.500 1.800" fill="none" stroke="#444" stroke-width="1.700" stroke-linecap="round" stroke-linejoin="round"/></svg>
<span class="t" style="left:1420.7px;top:2463.6px;height:28px;line-height:28px;font-size:20px;color:#3f3f3f;font-family:'Liberation Sans','Noto Sans CJK SC',sans-serif;">%</span>
<span class="t" style="left:1459.0px;top:2464.6px;height:15px;line-height:15px;font-size:10.5px;color:#3f3f3f;font-family:'Liberation Sans','Noto Sans CJK SC',sans-serif;">000</span>
<span class="t" style="left:1464.9px;top:2470.1px;height:21px;line-height:21px;font-size:15px;color:#3f3f3f;font-family:'Liberation Sans','Noto Sans CJK SC',sans-serif;font-weight:700;">,</span>
<span class="t" style="left:1495.9px;top:2464.6px;height:15px;line-height:15px;font-size:11px;color:#3f3f3f;font-family:'Liberation Sans','Noto Sans CJK SC',sans-serif;font-weight:700;">←.0</span>
<span class="t" style="left:1499.9px;top:2475.1px;height:15px;line-height:15px;font-size:11px;color:#3f3f3f;font-family:'Liberation Sans','Noto Sans CJK SC',sans-serif;font-weight:700;">.00</span>
<span class="t" style="left:1537.4px;top:2464.6px;height:15px;line-height:15px;font-size:11px;color:#3f3f3f;font-family:'Liberation Sans','Noto Sans CJK SC',sans-serif;font-weight:700;">.00</span>
<span class="t" style="left:1533.4px;top:2475.1px;height:15px;line-height:15px;font-size:11px;color:#3f3f3f;font-family:'Liberation Sans','Noto Sans CJK SC',sans-serif;font-weight:700;">→.0</span>
<svg class="b" style="left:1557px;top:2498px" width="8" height="8" viewBox="0 0 8 8"><path d="M1 1L6.500 6.500M6.500 2.500V6.500H2.500" fill="none" stroke="#8a8a8a" stroke-width="1.200"/></svg>
<div class="b" style="left:1569.8px;top:2417px;width:1px;height:89px;background:#e2e2e2;"></div>
<svg class="b" style="left:1583.5px;top:2426px;" width="27" height="27" viewBox="0 0 22 22" fill="none" stroke="#3f3f3f" stroke-width="1.1" stroke-linecap="round" stroke-linejoin="round"><rect x="3" y="10" width="5" height="9.500"/><path d="M11 2.500H19.500V7.500M11 2.500V7.500M15.500 2.500V7.500"/></svg>
<svg class="b" style="left:1583.5px;top:2426px;" width="27" height="27" viewBox="0 0 22 22" fill="none" stroke="#3f3f3f" stroke-width="1.1" stroke-linecap="round" stroke-linejoin="round"><rect x="3" y="2.500" width="5" height="5" stroke="#2bb58a"/></svg>
<span class="t" style="left:1615.0px;top:2428.5px;height:22px;line-height:22px;font-size:16px;color:#2b2b2b;letter-spacing:-0.51px;">行和列</span>
<svg class="b" style="left:1668.1px;top:2436.5px" width="9" height="7" viewBox="0 0 9 7"><path d="M1.500 1.800L4.500 4.800L7.500 1.800" fill="none" stroke="#444" stroke-width="1.700" stroke-linecap="round" stroke-linejoin="round"/></svg>
<svg class="b" style="left:1583.5px;top:2464.1px;" width="27" height="27" viewBox="0 0 22 22" fill="none" stroke="#3f3f3f" stroke-width="1.1" stroke-linecap="round" stroke-linejoin="round"><rect x="3" y="3.500" width="16" height="14"/><path d="M3 8H19M9 3.500V17.500"/><path d="M3 17.500H9.500V20.500H3z" stroke="#2bb58a"/></svg>
<span class="t" style="left:1615.0px;top:2466.6px;height:22px;line-height:22px;font-size:16px;color:#2b2b2b;letter-spacing:-0.51px;">工作表</span>
<svg class="b" style="left:1668.1px;top:2474.6px" width="9" height="7" viewBox="0 0 9 7"><path d="M1.500 1.800L4.500 4.800L7.500 1.800" fill="none" stroke="#444" stroke-width="1.700" stroke-linecap="round" stroke-linejoin="round"/></svg>
<div class="b" style="left:1696px;top:2417px;width:1px;height:89px;background:#e2e2e2;"></div>
<svg class="b" style="left:1734.6px;top:2425px;" width="34" height="34" viewBox="0 0 22 22" fill="none" stroke="#3f3f3f" stroke-width="1" stroke-linecap="round" stroke-linejoin="round"><path d="M6 3H3.500V19H6M16 3H18.500V19H16M3.500 8.200H5.500M3.500 13.800H5.500M16.500 8.200H18.500M16.500 13.800H18.500"/><rect x="7.500" y="4.500" width="7" height="13"/><path d="M7.500 11H14.500"/></svg>
<span class="t" style="left:1713.0px;top:2467.1px;height:22px;line-height:22px;font-size:16px;color:#2b2b2b;letter-spacing:0.16px;">条件格式</span>
<svg class="b" style="left:1779.5px;top:2474.6px" width="9" height="7" viewBox="0 0 9 7"><path d="M1.500 1.800L4.500 4.800L7.500 1.800" fill="none" stroke="#444" stroke-width="1.700" stroke-linecap="round" stroke-linejoin="round"/></svg>
<svg class="b" style="left:1802.5px;top:2426px;" width="27" height="27" viewBox="0 0 22 22" fill="none" stroke="#3f3f3f" stroke-width="1.1" stroke-linecap="round" stroke-linejoin="round"><path d="M3.500 4H15V11H3.500zM3.500 7.500H15M9 4V11"/><path d="M17.500 9L11 15.500L8.500 16.500L9.500 14L16 7.500z" stroke="#d9742b"/></svg>
<svg class="b" style="left:1832.5px;top:2436.5px" width="9" height="7" viewBox="0 0 9 7"><path d="M1.500 1.800L4.500 4.800L7.500 1.800" fill="none" stroke="#444" stroke-width="1.700" stroke-linecap="round" stroke-linejoin="round"/></svg>
<svg class="b" style="left:1803px;top:2464.6px;" width="26" height="26" viewBox="0 0 22 22" fill="none" stroke="#3f3f3f" stroke-width="1.3" stroke-linecap="round" stroke-linejoin="round"><path d="M6 2.500V19.500M16 2.500V19.500M2.500 6H19.500M2.500 16H19.500"/></svg>
<svg class="b" style="left:1832.5px;top:2474.6px" width="9" height="7" viewBox="0 0 9 7"><path d="M1.500 1.800L4.500 4.800L7.500 1.800" fill="none" stroke="#444" stroke-width="1.700" stroke-linecap="round" stroke-linejoin="round"/></svg>
<div class="b" style="left:1860.7px;top:2417px;width:1px;height:89px;background:#e2e2e2;"></div>
<svg class="b" style="left:1874px;top:2425.5px;" width="28" height="28" viewBox="0 0 22 22" fill="none" stroke="#3f3f3f" stroke-width="1.05" stroke-linecap="round" stroke-linejoin="round"><path d="M7.500 3.500H3.500V18.500H18.500V3.500H14.500"/><path d="M11 2.500V13.500M7.500 10.500L11 14L14.500 10.500"/></svg>
<span class="t" style="left:1906.5px;top:2428.5px;height:22px;line-height:22px;font-size:16px;color:#2b2b2b;letter-spacing:-0.52px;">填充</span>
<svg class="b" style="left:1943.5px;top:2436.5px" width="9" height="7" viewBox="0 0 9 7"><path d="M1.500 1.800L4.500 4.800L7.500 1.800" fill="none" stroke="#444" stroke-width="1.700" stroke-linecap="round" stroke-linejoin="round"/></svg>
<svg class="b" style="left:1874px;top:2463.6px;" width="28" height="28" viewBox="0 0 22 22" fill="none" stroke="#3f3f3f" stroke-width="1.1" stroke-linecap="round" stroke-linejoin="round"><path d="M17.500 6V3.500H4L11 11L4 18.500H17.500V16"/></svg>
<span class="t" style="left:1906.5px;top:2466.6px;height:22px;line-height:22px;font-size:16px;color:#2b2b2b;letter-spacing:-0.52px;">求和</span>
<svg class="b" style="left:1943.5px;top:2474.6px" width="9" height="7" viewBox="0 0 9 7"><path d="M1.500 1.800L4.500 4.800L7.500 1.800" fill="none" stroke="#444" stroke-width="1.700" stroke-linecap="round" stroke-linejoin="round"/></svg>
<svg class="b" style="left:1967px;top:2425.5px;" width="28" height="28" viewBox="0 0 22 22" fill="none" stroke="#3f3f3f" stroke-width="1.05" stroke-linecap="round" stroke-linejoin="round"><path d="M2.500 18.500L6.500 3.500H8.500L11.500 18.500zM4 13.500H10.500"/><path d="M16.500 3.500V18M13.500 15L16.500 18.500L19.500 15" stroke="#3b6fd0"/></svg>
<span class="t" style="left:1997.7px;top:2428.5px;height:22px;line-height:22px;font-size:16px;color:#2b2b2b;letter-spacing:-0.22px;">排序</span>
<svg class="b" style="left:2035px;top:2436.5px" width="9" height="7" viewBox="0 0 9 7"><path d="M1.500 1.800L4.500 4.800L7.500 1.800" fill="none" stroke="#444" stroke-width="1.700" stroke-linecap="round" stroke-linejoin="round"/></svg>
<div class="b" style="left:1963.7px;top:2462px;width:87.8px;height:31px;background:#e5e5e5;border:1px solid #d9d9d9;border-radius:5px;"></div>
<div class="b" style="left:2032px;top:2463px;width:19px;height:29px;background:#f6f6f6;border-radius:0 4px 4px 0;"></div>
<svg class="b" style="left:1967px;top:2463.6px;" width="28" height="28" viewBox="0 0 22 22" fill="none" stroke="#3f3f3f" stroke-width="1.05" stroke-linecap="round" stroke-linejoin="round"><path d="M3 4H19L13.200 11.500V17L8.800 19.500V11.500z"/></svg>
<span class="t" style="left:1997.7px;top:2466.6px;height:22px;line-height:22px;font-size:16px;color:#2b2b2b;letter-spacing:-0.22px;">筛选</span>
<svg class="b" style="left:2036.5px;top:2474.6px" width="9" height="7" viewBox="0 0 9 7"><path d="M1.500 1.800L4.500 4.800L7.500 1.800" fill="none" stroke="#444" stroke-width="1.700" stroke-linecap="round" stroke-linejoin="round"/></svg>
<svg class="b" style="left:2058.4px;top:2425.5px;" width="28" height="28" viewBox="0 0 22 22" fill="none" stroke="#3f3f3f" stroke-width="1.05" stroke-linecap="round" stroke-linejoin="round"><path d="M9 3.500H18.500V18.500H9M11.500 3.500V18.500M3.500 9V18.500H9M3.500 11.500H18.500"/><path d="M3.500 3.500H8.500V8.500H3.500zM3.500 8.500L8.500 3.500" stroke="#2bb58a"/></svg>
<span class="t" style="left:2089.0px;top:2428.5px;height:22px;line-height:22px;font-size:16px;color:#2b2b2b;letter-spacing:-0.02px;">冻结</span>
<svg class="b" style="left:2127px;top:2436.5px" width="9" height="7" viewBox="0 0 9 7"><path d="M1.500 1.800L4.500 4.800L7.500 1.800" fill="none" stroke="#444" stroke-width="1.700" stroke-linecap="round" stroke-linejoin="round"/></svg>
<svg class="b" style="left:2058.4px;top:2463.6px;" width="28" height="28" viewBox="0 0 22 22" fill="none" stroke="#3f3f3f" stroke-width="1.1" stroke-linecap="round" stroke-linejoin="round"><circle cx="9.500" cy="9.500" r="6.300"/><path d="M14.200 14.200L19.500 19.500"/></svg>
<span class="t" style="left:2089.0px;top:2466.6px;height:22px;line-height:22px;font-size:16px;color:#2b2b2b;letter-spacing:-0.02px;">查找</span>
<svg class="b" style="left:2127px;top:2474.6px" width="9" height="7" viewBox="0 0 9 7"><path d="M1.500 1.800L4.500 4.800L7.500 1.800" fill="none" stroke="#444" stroke-width="1.700" stroke-linecap="round" stroke-linejoin="round"/></svg>
<div class="b" style="left:2154.4px;top:2417px;width:1px;height:89px;background:#e2e2e2;"></div>
<svg class="b" style="left:2209.5px;top:2425px;" width="34" height="34" viewBox="0 0 22 22" fill="none" stroke="#3f3f3f" stroke-width="1.3" stroke-linecap="round" stroke-linejoin="round"><path d="M6.500 16.500H12A4 4 0 0 0 16.300 8.600A5.500 5.500 0 0 0 5.800 9.800A3.400 3.400 0 0 0 6.500 16.500z" stroke="#2aa7d8"/><path d="M12 16.500H15.800A2.800 2.800 0 1 0 13 13.700" stroke="#e0426b"/></svg>
<span class="t" style="left:2170.6px;top:2467.7px;height:22px;line-height:22px;font-size:16px;color:#2b2b2b;letter-spacing:0.40px;">保存到天翼云盘</span>
<div class="b" style="left:17px;top:2520px;width:217px;height:35px;background:#fff;border-radius:6px;box-shadow:0 1px 2px rgba(0,0,0,.13);"></div>
<span class="t" style="left:98.3px;top:2526.0px;height:24px;line-height:24px;font-size:17px;color:#333;font-family:'Liberation Serif','Noto Serif CJK SC',serif;">E25</span>
<svg class="b" style="left:210.5px;top:2530.5px;" width="16" height="16" viewBox="0 0 22 22" fill="none" stroke="#555" stroke-width="1.8" stroke-linecap="round" stroke-linejoin="round"><path d="M5 8.500L11 14.500L17 8.500"/></svg>
<div class="b" style="left:247px;top:2520px;width:2497px;height:35px;background:#fff;border-radius:6px;box-shadow:0 1px 2px rgba(0,0,0,.13);"></div>
<svg class="b" style="left:277.5px;top:2526.5px;" width="22" height="22" viewBox="0 0 22 22" fill="none" stroke="#555" stroke-width="1.4" stroke-linecap="round" stroke-linejoin="round"><circle cx="10" cy="10" r="6.500"/><path d="M7 10H13M14.800 14.800L19 19"/></svg>
<span class="t" style="left:323.2px;top:2523.5px;height:28px;line-height:28px;font-size:20px;color:#444;font-family:'Liberation Serif','Noto Serif CJK SC',serif;font-style:italic;">f</span>
<span class="t" style="left:331.2px;top:2529.5px;height:21px;line-height:21px;font-size:15px;color:#444;font-family:'Liberation Serif','Noto Serif CJK SC',serif;font-style:italic;">x</span>
<div class="b" style="left:356.5px;top:2527px;width:1px;height:21px;background:#d8d8d8;"></div>
<div class="b" style="left:0px;top:2563px;width:2739px;height:1169px;background:#fff;"></div>
<div class="b" style="left:0px;top:2556.5px;width:2761px;height:38.5px;background:#eeeeee;"></div>
<div class="b" style="left:0px;top:2563px;width:46px;height:1169px;background:#eeeeee;"></div>
<div class="b" style="left:719.6px;top:2563px;width:56.1px;height:32px;background:#dedede;"></div>
<div class="b" style="left:719.6px;top:2592.3px;width:56.1px;height:2.7px;background:#0f9d6c;"></div>
<div class="b" style="left:0px;top:2828.91px;width:46px;height:38.87px;background:#e2e2e2;"></div>
<div class="b" style="left:44px;top:2828.91px;width:2.5px;height:38.87px;background:#0f9d6c;"></div>
<svg class="b" style="left:0;top:0" width="2761" height="3800" viewBox="0 0 2761 3800" fill="none" stroke="#e8e8e8" stroke-width="1" shape-rendering="crispEdges"><path d="M270 2595V3732"/><path d="M607.5 2595V3732"/><path d="M719.6 2595V3732"/><path d="M775.7 2595V3732"/><path d="M898 2595V3732"/><path d="M994 2595V3732"/><path d="M1090 2595V3732"/><path d="M1166.5 2595V3732"/><path d="M1243 2595V3732"/><path d="M1317 2595V3732"/><path d="M1474 2595V3732"/><path d="M1570 2595V3732"/><path d="M1666 2595V3732"/><path d="M1762 2595V3732"/><path d="M1858 2595V3732"/><path d="M1954 2595V3732"/><path d="M2050 2595V3732"/><path d="M2146 2595V3732"/><path d="M2242 2595V3732"/><path d="M2338 2595V3732"/><path d="M2434 2595V3732"/><path d="M2530 2595V3732"/><path d="M2626 2595V3732"/><path d="M2722 2595V3732"/><path d="M2722 2595V3732"/><path d="M46 2673.00H2739"/><path d="M46 2711.87H2739"/><path d="M46 2750.74H2739"/><path d="M46 2789.61H2739"/><path d="M46 2828.48H2739"/><path d="M46 2867.35H2739"/><path d="M46 2906.22H2739"/><path d="M46 2945.09H2739"/><path d="M46 2983.96H2739"/><path d="M46 3022.83H2739"/><path d="M46 3061.70H2739"/><path d="M46 3100.57H2739"/><path d="M46 3139.44H2739"/><path d="M46 3178.31H2739"/><path d="M46 3217.18H2739"/><path d="M46 3256.05H2739"/><path d="M46 3294.92H2739"/><path d="M46 3333.79H2739"/><path d="M46 3372.66H2739"/><path d="M46 3411.53H2739"/><path d="M46 3450.40H2739"/><path d="M46 3489.27H2739"/><path d="M46 3528.14H2739"/><path d="M46 3567.01H2739"/><path d="M46 3605.88H2739"/><path d="M46 3644.75H2739"/><path d="M46 3683.62H2739"/><path d="M46 3722.49H2739"/></svg>
<svg class="b" style="left:0;top:0" width="2761" height="3800" viewBox="0 0 2761 3800" fill="none" stroke="#e2e2e2" stroke-width="1" shape-rendering="crispEdges"><path d="M46 2566V2595"/><path d="M142 2566V2595"/><path d="M270 2566V2595"/><path d="M607.5 2566V2595"/><path d="M719.6 2566V2595"/><path d="M775.7 2566V2595"/><path d="M898 2566V2595"/><path d="M994 2566V2595"/><path d="M1090 2566V2595"/><path d="M1166.5 2566V2595"/><path d="M1243 2566V2595"/><path d="M1317 2566V2595"/><path d="M1378 2566V2595"/><path d="M1474 2566V2595"/><path d="M1570 2566V2595"/><path d="M1666 2566V2595"/><path d="M1762 2566V2595"/><path d="M1858 2566V2595"/><path d="M1954 2566V2595"/><path d="M2050 2566V2595"/><path d="M2146 2566V2595"/><path d="M2242 2566V2595"/><path d="M2338 2566V2595"/><path d="M2434 2566V2595"/><path d="M2530 2566V2595"/><path d="M2626 2566V2595"/><path d="M2722 2566V2595"/><path d="M2722 2566V2595"/><path d="M0 2595H46"/><path d="M0 2636H46"/><path d="M0 2673.00H46"/><path d="M0 2711.87H46"/><path d="M0 2750.74H46"/><path d="M0 2789.61H46"/><path d="M0 2828.48H46"/><path d="M0 2867.35H46"/><path d="M0 2906.22H46"/><path d="M0 2945.09H46"/><path d="M0 2983.96H46"/><path d="M0 3022.83H46"/><path d="M0 3061.70H46"/><path d="M0 3100.57H46"/><path d="M0 3139.44H46"/><path d="M0 3178.31H46"/><path d="M0 3217.18H46"/><path d="M0 3256.05H46"/><path d="M0 3294.92H46"/><path d="M0 3333.79H46"/><path d="M0 3372.66H46"/><path d="M0 3411.53H46"/><path d="M0 3450.40H46"/><path d="M0 3489.27H46"/><path d="M0 3528.14H46"/><path d="M0 3567.01H46"/><path d="M0 3605.88H46"/><path d="M0 3644.75H46"/><path d="M0 3683.62H46"/><path d="M0 3722.49H46"/></svg>
<div class="b" style="left:0px;top:2594.5px;width:2739px;height:1.2px;background:#d5d5d5;"></div>
<div class="b" style="left:0px;top:2634px;width:2739px;height:3.2px;background:#c6c6c6;"></div>
<div class="b" style="left:141px;top:2595.5px;width:2.3px;height:1136.5px;background:#111;"></div>
<div class="b" style="left:1377.2px;top:2595.5px;width:2.3px;height:1136.5px;background:#111;"></div>
<svg class="b" style="left:20px;top:2576px" width="12" height="12" viewBox="0 0 12 12"><path d="M10.500 1.500V10.500H1.500z" fill="#8a8a8a"/></svg>
<span class="t" style="left:88.3px;top:2567.5px;height:24px;line-height:24px;font-size:17px;color:#5c5c5c;font-family:'Liberation Sans','Noto Sans CJK SC',sans-serif;">A</span>
<span class="t" style="left:200.3px;top:2567.5px;height:24px;line-height:24px;font-size:17px;color:#5c5c5c;font-family:'Liberation Sans','Noto Sans CJK SC',sans-serif;">B</span>
<span class="t" style="left:432.6px;top:2567.5px;height:24px;line-height:24px;font-size:17px;color:#5c5c5c;font-family:'Liberation Sans','Noto Sans CJK SC',sans-serif;">C</span>
<span class="t" style="left:657.4px;top:2567.5px;height:24px;line-height:24px;font-size:17px;color:#5c5c5c;font-family:'Liberation Sans','Noto Sans CJK SC',sans-serif;">D</span>
<span class="t" style="left:742.0px;top:2567.5px;height:24px;line-height:24px;font-size:17px;color:#0f9d6c;font-family:'Liberation Sans','Noto Sans CJK SC',sans-serif;">E</span>
<span class="t" style="left:831.7px;top:2567.5px;height:24px;line-height:24px;font-size:17px;color:#5c5c5c;font-family:'Liberation Sans','Noto Sans CJK SC',sans-serif;">F</span>
<span class="t" style="left:939.4px;top:2567.5px;height:24px;line-height:24px;font-size:17px;color:#5c5c5c;font-family:'Liberation Sans','Noto Sans CJK SC',sans-serif;">G</span>
<span class="t" style="left:1035.9px;top:2567.5px;height:24px;line-height:24px;font-size:17px;color:#5c5c5c;font-family:'Liberation Sans','Noto Sans CJK SC',sans-serif;">H</span>
<span class="t" style="left:1125.9px;top:2567.5px;height:24px;line-height:24px;font-size:17px;color:#5c5c5c;font-family:'Liberation Sans','Noto Sans CJK SC',sans-serif;">I</span>
<span class="t" style="left:1200.5px;top:2567.5px;height:24px;line-height:24px;font-size:17px;color:#5c5c5c;font-family:'Liberation Sans','Noto Sans CJK SC',sans-serif;">J</span>
<span class="t" style="left:1274.3px;top:2567.5px;height:24px;line-height:24px;font-size:17px;color:#5c5c5c;font-family:'Liberation Sans','Noto Sans CJK SC',sans-serif;">K</span>
<span class="t" style="left:1342.8px;top:2567.5px;height:24px;line-height:24px;font-size:17px;color:#5c5c5c;font-family:'Liberation Sans','Noto Sans CJK SC',sans-serif;">L</span>
<span class="t" style="left:1418.9px;top:2567.5px;height:24px;line-height:24px;font-size:17px;color:#5c5c5c;font-family:'Liberation Sans','Noto Sans CJK SC',sans-serif;">M</span>
<span class="t" style="left:1515.9px;top:2567.5px;height:24px;line-height:24px;font-size:17px;color:#5c5c5c;font-family:'Liberation Sans','Noto Sans CJK SC',sans-serif;">N</span>
<span class="t" style="left:1611.4px;top:2567.5px;height:24px;line-height:24px;font-size:17px;color:#5c5c5c;font-family:'Liberation Sans','Noto Sans CJK SC',sans-serif;">O</span>
<span class="t" style="left:1708.3px;top:2567.5px;height:24px;line-height:24px;font-size:17px;color:#5c5c5c;font-family:'Liberation Sans','Noto Sans CJK SC',sans-serif;">P</span>
<span class="t" style="left:1803.4px;top:2567.5px;height:24px;line-height:24px;font-size:17px;color:#5c5c5c;font-family:'Liberation Sans','Noto Sans CJK SC',sans-serif;">Q</span>
<span class="t" style="left:1899.9px;top:2567.5px;height:24px;line-height:24px;font-size:17px;color:#5c5c5c;font-family:'Liberation Sans','Noto Sans CJK SC',sans-serif;">R</span>
<span class="t" style="left:1996.3px;top:2567.5px;height:24px;line-height:24px;font-size:17px;color:#5c5c5c;font-family:'Liberation Sans','Noto Sans CJK SC',sans-serif;">S</span>
<span class="t" style="left:2092.8px;top:2567.5px;height:24px;line-height:24px;font-size:17px;color:#5c5c5c;font-family:'Liberation Sans','Noto Sans CJK SC',sans-serif;">T</span>
<span class="t" style="left:2187.9px;top:2567.5px;height:24px;line-height:24px;font-size:17px;color:#5c5c5c;font-family:'Liberation Sans','Noto Sans CJK SC',sans-serif;">U</span>
<span class="t" style="left:2284.3px;top:2567.5px;height:24px;line-height:24px;font-size:17px;color:#5c5c5c;font-family:'Liberation Sans','Noto Sans CJK SC',sans-serif;">V</span>
<span class="t" style="left:2378.0px;top:2567.5px;height:24px;line-height:24px;font-size:17px;color:#5c5c5c;font-family:'Liberation Sans','Noto Sans CJK SC',sans-serif;">W</span>
<span class="t" style="left:2476.3px;top:2567.5px;height:24px;line-height:24px;font-size:17px;color:#5c5c5c;font-family:'Liberation Sans','Noto Sans CJK SC',sans-serif;">X</span>
<span class="t" style="left:2572.3px;top:2567.5px;height:24px;line-height:24px;font-size:17px;color:#5c5c5c;font-family:'Liberation Sans','Noto Sans CJK SC',sans-serif;">Y</span>
<span class="t" style="left:2668.8px;top:2567.5px;height:24px;line-height:24px;font-size:17px;color:#5c5c5c;font-family:'Liberation Sans','Noto Sans CJK SC',sans-serif;">Z</span>
<span class="t" style="left:18.8px;top:2603.0px;height:24px;line-height:24px;font-size:17px;color:#5c5c5c;font-family:'Liberation Sans','Noto Sans CJK SC',sans-serif;">1</span>
<span class="t" style="left:14.0px;top:2642.0px;height:24px;line-height:24px;font-size:17px;color:#5c5c5c;font-family:'Liberation Sans','Noto Sans CJK SC',sans-serif;">20</span>
<span class="t" style="left:14.0px;top:2680.9px;height:24px;line-height:24px;font-size:17px;color:#5c5c5c;font-family:'Liberation Sans','Noto Sans CJK SC',sans-serif;">21</span>
<span class="t" style="left:14.0px;top:2719.7px;height:24px;line-height:24px;font-size:17px;color:#5c5c5c;font-family:'Liberation Sans','Noto Sans CJK SC',sans-serif;">22</span>
<span class="t" style="left:14.0px;top:2758.6px;height:24px;line-height:24px;font-size:17px;color:#5c5c5c;font-family:'Liberation Sans','Noto Sans CJK SC',sans-serif;">23</span>
<span class="t" style="left:14.0px;top:2797.5px;height:24px;line-height:24px;font-size:17px;color:#5c5c5c;font-family:'Liberation Sans','Noto Sans CJK SC',sans-serif;">24</span>
<span class="t" style="left:14.0px;top:2836.3px;height:24px;line-height:24px;font-size:17px;color:#0f9d6c;font-family:'Liberation Sans','Noto Sans CJK SC',sans-serif;">25</span>
<span class="t" style="left:14.0px;top:2875.2px;height:24px;line-height:24px;font-size:17px;color:#5c5c5c;font-family:'Liberation Sans','Noto Sans CJK SC',sans-serif;">26</span>
<span class="t" style="left:14.0px;top:2914.1px;height:24px;line-height:24px;font-size:17px;color:#5c5c5c;font-family:'Liberation Sans','Noto Sans CJK SC',sans-serif;">27</span>
<span class="t" style="left:14.0px;top:2953.0px;height:24px;line-height:24px;font-size:17px;color:#5c5c5c;font-family:'Liberation Sans','Noto Sans CJK SC',sans-serif;">28</span>
<span class="t" style="left:14.0px;top:2991.8px;height:24px;line-height:24px;font-size:17px;color:#5c5c5c;font-family:'Liberation Sans','Noto Sans CJK SC',sans-serif;">29</span>
<span class="t" style="left:14.0px;top:3030.7px;height:24px;line-height:24px;font-size:17px;color:#5c5c5c;font-family:'Liberation Sans','Noto Sans CJK SC',sans-serif;">30</span>
<span class="t" style="left:14.0px;top:3069.6px;height:24px;line-height:24px;font-size:17px;color:#5c5c5c;font-family:'Liberation Sans','Noto Sans CJK SC',sans-serif;">31</span>
<span class="t" style="left:14.0px;top:3108.4px;height:24px;line-height:24px;font-size:17px;color:#5c5c5c;font-family:'Liberation Sans','Noto Sans CJK SC',sans-serif;">32</span>
<span class="t" style="left:14.0px;top:3147.3px;height:24px;line-height:24px;font-size:17px;color:#5c5c5c;font-family:'Liberation Sans','Noto Sans CJK SC',sans-serif;">33</span>
<span class="t" style="left:14.0px;top:3186.2px;height:24px;line-height:24px;font-size:17px;color:#5c5c5c;font-family:'Liberation Sans','Noto Sans CJK SC',sans-serif;">34</span>
<span class="t" style="left:14.0px;top:3225.1px;height:24px;line-height:24px;font-size:17px;color:#5c5c5c;font-family:'Liberation Sans','Noto Sans CJK SC',sans-serif;">35</span>
<span class="t" style="left:14.0px;top:3263.9px;height:24px;line-height:24px;font-size:17px;color:#5c5c5c;font-family:'Liberation Sans','Noto Sans CJK SC',sans-serif;">36</span>
<span class="t" style="left:14.0px;top:3302.8px;height:24px;line-height:24px;font-size:17px;color:#5c5c5c;font-family:'Liberation Sans','Noto Sans CJK SC',sans-serif;">37</span>
<span class="t" style="left:14.0px;top:3341.7px;height:24px;line-height:24px;font-size:17px;color:#5c5c5c;font-family:'Liberation Sans','Noto Sans CJK SC',sans-serif;">38</span>
<span class="t" style="left:14.0px;top:3380.5px;height:24px;line-height:24px;font-size:17px;color:#5c5c5c;font-family:'Liberation Sans','Noto Sans CJK SC',sans-serif;">39</span>
<span class="t" style="left:14.0px;top:3419.4px;height:24px;line-height:24px;font-size:17px;color:#5c5c5c;font-family:'Liberation Sans','Noto Sans CJK SC',sans-serif;">40</span>
<span class="t" style="left:14.0px;top:3458.3px;height:24px;line-height:24px;font-size:17px;color:#5c5c5c;font-family:'Liberation Sans','Noto Sans CJK SC',sans-serif;">41</span>
<span class="t" style="left:14.0px;top:3497.1px;height:24px;line-height:24px;font-size:17px;color:#5c5c5c;font-family:'Liberation Sans','Noto Sans CJK SC',sans-serif;">42</span>
<span class="t" style="left:14.0px;top:3536.0px;height:24px;line-height:24px;font-size:17px;color:#5c5c5c;font-family:'Liberation Sans','Noto Sans CJK SC',sans-serif;">43</span>
<span class="t" style="left:14.0px;top:3574.9px;height:24px;line-height:24px;font-size:17px;color:#5c5c5c;font-family:'Liberation Sans','Noto Sans CJK SC',sans-serif;">44</span>
<span class="t" style="left:14.0px;top:3613.8px;height:24px;line-height:24px;font-size:17px;color:#5c5c5c;font-family:'Liberation Sans','Noto Sans CJK SC',sans-serif;">45</span>
<span class="t" style="left:14.0px;top:3652.6px;height:24px;line-height:24px;font-size:17px;color:#5c5c5c;font-family:'Liberation Sans','Noto Sans CJK SC',sans-serif;">46</span>
<span class="t" style="left:14.0px;top:3691.5px;height:24px;line-height:24px;font-size:17px;color:#5c5c5c;font-family:'Liberation Sans','Noto Sans CJK SC',sans-serif;">47</span>
<span class="t" style="left:64.7px;top:2603.0px;height:24px;line-height:24px;font-size:17.3px;color:#1f1f1f;letter-spacing:-0.69px;">123.00</span>
<span class="t" style="left:189.0px;top:2603.5px;height:24px;line-height:24px;font-size:17.3px;color:#1f1f1f;letter-spacing:-0.58px;">日期</span>
<div class="b" style="left:249.5px;top:2614px;width:20px;height:20px;background:#fff;border:1px solid #d4d4d4;"></div>
<svg class="b" style="left:254.5px;top:2622px" width="10" height="7" viewBox="0 0 10 7"><path d="M0.500 0.500H9.500L5 6.500z" fill="#17a06e"/></svg>
<span class="t" style="left:421.8px;top:2603.5px;height:24px;line-height:24px;font-size:17.3px;color:#1f1f1f;letter-spacing:-0.58px;">内容</span>
<div class="b" style="left:587px;top:2614px;width:20px;height:20px;background:#fff;border:1px solid #d4d4d4;"></div>
<svg class="b" style="left:592px;top:2622px" width="10" height="7" viewBox="0 0 10 7"><path d="M0.500 0.500H9.500L5 6.500z" fill="#17a06e"/></svg>
<span class="t" style="left:646.5px;top:2603.5px;height:24px;line-height:24px;font-size:17.3px;color:#1f1f1f;letter-spacing:-0.58px;">金额</span>
<div class="b" style="left:699.1px;top:2614px;width:20px;height:20px;background:#fff;border:1px solid #d4d4d4;"></div>
<svg class="b" style="left:704.1px;top:2622px" width="10" height="7" viewBox="0 0 10 7"><path d="M0.500 0.500H9.500L5 6.500z" fill="#17a06e"/></svg>
<span class="t" style="left:730.7px;top:2603.5px;height:24px;line-height:24px;font-size:17.3px;color:#1f1f1f;letter-spacing:-0.58px;">成员</span>
<div class="b" style="left:755.2px;top:2614px;width:20px;height:20px;background:#fff;border:1px solid #d4d4d4;"></div>
<svg class="b" style="left:760.2px;top:2622px" width="10" height="7" viewBox="0 0 10 7"><path d="M0.500 0.500H9.500L5 6.500z" fill="#17a06e"/></svg>
<span class="t" style="left:827.9px;top:2603.0px;height:25px;line-height:25px;font-size:18px;color:#1f1f1f;font-family:'Liberation Serif','Noto Serif CJK SC',serif;font-weight:700;">Ⅲ</span>
<div class="b" style="left:877.5px;top:2614px;width:20px;height:20px;background:#fff;border:1px solid #d4d4d4;"></div>
<svg class="b" style="left:882.5px;top:2622px" width="10" height="7" viewBox="0 0 10 7"><path d="M0.500 0.500H9.500L5 6.500z" fill="#17a06e"/></svg>
<span class="t" style="left:937.0px;top:2603.0px;height:25px;line-height:25px;font-size:18px;color:#1f1f1f;font-family:'Liberation Serif','Noto Serif CJK SC',serif;font-weight:700;">Ⅱ</span>
<div class="b" style="left:973.5px;top:2614px;width:20px;height:20px;background:#fff;border:1px solid #d4d4d4;"></div>
<svg class="b" style="left:978.5px;top:2622px" width="10" height="7" viewBox="0 0 10 7"><path d="M0.500 0.500H9.500L5 6.500z" fill="#17a06e"/></svg>
<span class="t" style="left:1033.0px;top:2603.0px;height:25px;line-height:25px;font-size:18px;color:#1f1f1f;font-family:'Liberation Serif','Noto Serif CJK SC',serif;font-weight:700;">Ⅰ</span>
<div class="b" style="left:1069.5px;top:2614px;width:20px;height:20px;background:#fff;border:1px solid #d4d4d4;"></div>
<svg class="b" style="left:1074.5px;top:2622px" width="10" height="7" viewBox="0 0 10 7"><path d="M0.500 0.500H9.500L5 6.500z" fill="#17a06e"/></svg>
<span class="t" style="left:1111.2px;top:2603.5px;height:24px;line-height:24px;font-size:17.3px;color:#1f1f1f;letter-spacing:-0.58px;">年度</span>
<div class="b" style="left:1146px;top:2614px;width:20px;height:20px;background:#fff;border:1px solid #d4d4d4;"></div>
<svg class="b" style="left:1151px;top:2622px" width="10" height="7" viewBox="0 0 10 7"><path d="M0.500 0.500H9.500L5 6.500z" fill="#17a06e"/></svg>
<span class="t" style="left:1187.8px;top:2603.5px;height:24px;line-height:24px;font-size:17.3px;color:#1f1f1f;letter-spacing:-0.58px;">月度</span>
<div class="b" style="left:1222.5px;top:2614px;width:20px;height:20px;background:#fff;border:1px solid #d4d4d4;"></div>
<svg class="b" style="left:1227.5px;top:2622px" width="10" height="7" viewBox="0 0 10 7"><path d="M0.500 0.500H9.500L5 6.500z" fill="#17a06e"/></svg>
<span class="t" style="left:1263.0px;top:2603.5px;height:24px;line-height:24px;font-size:17.3px;color:#1f1f1f;letter-spacing:-0.58px;">对账</span>
<div class="b" style="left:1296.5px;top:2614px;width:20px;height:20px;background:#fff;border:1px solid #d4d4d4;"></div>
<svg class="b" style="left:1301.5px;top:2622px" width="10" height="7" viewBox="0 0 10 7"><path d="M0.500 0.500H9.500L5 6.500z" fill="#17a06e"/></svg>
<span class="t" style="left:1330.5px;top:2603.5px;height:24px;line-height:24px;font-size:17.3px;color:#1f1f1f;letter-spacing:-0.58px;">预算</span>
<div class="b" style="left:1357.5px;top:2614px;width:20px;height:20px;background:#fff;border:1px solid #d4d4d4;"></div>
<svg class="b" style="left:1362.5px;top:2622px" width="10" height="7" viewBox="0 0 10 7"><path d="M0.500 0.500H9.500L5 6.500z" fill="#17a06e"/></svg>
<span class="t" style="left:155.7px;top:2642.0px;height:24px;line-height:24px;font-size:17.3px;color:#1f1f1f;letter-spacing:0.12px;">2017/11/20</span>
<span class="t" style="left:386.5px;top:2642.0px;height:24px;line-height:24px;font-size:17.3px;color:#1f1f1f;letter-spacing:0.15px;">cloudlet.net</span>
<span class="t" style="left:629.3px;top:2642.0px;height:24px;line-height:24px;font-size:17.3px;color:#1f1f1f;letter-spacing:-0.49px;">2000.00</span>
<span class="t" style="left:819.6px;top:2642.0px;height:24px;line-height:24px;font-size:17.3px;color:#1f1f1f;letter-spacing:-0.08px;">域名</span>
<span class="t" style="left:928.8px;top:2642.0px;height:24px;line-height:24px;font-size:17.3px;color:#1f1f1f;letter-spacing:-0.08px;">其他</span>
<span class="t" style="left:1024.8px;top:2642.0px;height:24px;line-height:24px;font-size:17.3px;color:#1f1f1f;letter-spacing:-0.08px;">支出</span>
<span class="t" style="left:1117.2px;top:2642.0px;height:24px;line-height:24px;font-size:17.3px;color:#1f1f1f;">17</span>
<span class="t" style="left:1193.8px;top:2642.0px;height:24px;line-height:24px;font-size:17.3px;color:#1f1f1f;">11</span>
<span class="t" style="left:155.7px;top:2680.9px;height:24px;line-height:24px;font-size:17.3px;color:#1f1f1f;letter-spacing:0.12px;">2017/11/20</span>
<span class="t" style="left:385.8px;top:2680.9px;height:24px;line-height:24px;font-size:17.3px;color:#1f1f1f;letter-spacing:0.29px;">cloudlet.org</span>
<span class="t" style="left:629.3px;top:2680.9px;height:24px;line-height:24px;font-size:17.3px;color:#1f1f1f;letter-spacing:-0.49px;">2000.00</span>
<span class="t" style="left:819.6px;top:2680.9px;height:24px;line-height:24px;font-size:17.3px;color:#1f1f1f;letter-spacing:-0.08px;">域名</span>
<span class="t" style="left:928.8px;top:2680.9px;height:24px;line-height:24px;font-size:17.3px;color:#1f1f1f;letter-spacing:-0.08px;">其他</span>
<span class="t" style="left:1024.8px;top:2680.9px;height:24px;line-height:24px;font-size:17.3px;color:#1f1f1f;letter-spacing:-0.08px;">支出</span>
<span class="t" style="left:1117.2px;top:2680.9px;height:24px;line-height:24px;font-size:17.3px;color:#1f1f1f;">17</span>
<span class="t" style="left:1193.8px;top:2680.9px;height:24px;line-height:24px;font-size:17.3px;color:#1f1f1f;">11</span>
<span class="t" style="left:155.7px;top:2719.7px;height:24px;line-height:24px;font-size:17.3px;color:#1f1f1f;letter-spacing:0.12px;">2017/11/20</span>
<span class="t" style="left:391.2px;top:2719.7px;height:24px;line-height:24px;font-size:17.3px;color:#1f1f1f;letter-spacing:0.15px;">cloudlet.cc</span>
<span class="t" style="left:629.3px;top:2719.7px;height:24px;line-height:24px;font-size:17.3px;color:#1f1f1f;letter-spacing:-0.49px;">2000.00</span>
<span class="t" style="left:819.6px;top:2719.7px;height:24px;line-height:24px;font-size:17.3px;color:#1f1f1f;letter-spacing:-0.08px;">域名</span>
<span class="t" style="left:928.8px;top:2719.7px;height:24px;line-height:24px;font-size:17.3px;color:#1f1f1f;letter-spacing:-0.08px;">其他</span>
<span class="t" style="left:1024.8px;top:2719.7px;height:24px;line-height:24px;font-size:17.3px;color:#1f1f1f;letter-spacing:-0.08px;">支出</span>
<span class="t" style="left:1117.2px;top:2719.7px;height:24px;line-height:24px;font-size:17.3px;color:#1f1f1f;">17</span>
<span class="t" style="left:1193.8px;top:2719.7px;height:24px;line-height:24px;font-size:17.3px;color:#1f1f1f;">11</span>
<span class="t" style="left:645.0px;top:2758.6px;height:24px;line-height:24px;font-size:17.3px;color:#1f1f1f;letter-spacing:-0.49px;">0.00</span>
<span class="t" style="left:634.8px;top:2797.5px;height:24px;line-height:24px;font-size:17.3px;color:#1f1f1f;letter-spacing:-0.59px;">123.00</span>
<span class="t" style="left:167.0px;top:3030.7px;height:24px;line-height:24px;font-size:17.3px;color:#1f1f1f;letter-spacing:0.05px;">2048/1/1</span>
<span class="t" style="left:645.0px;top:3030.7px;height:24px;line-height:24px;font-size:17.3px;color:#1f1f1f;letter-spacing:-0.49px;">0.00</span>
<span class="t" style="left:819.6px;top:3030.7px;height:24px;line-height:24px;font-size:17.3px;color:#1f1f1f;letter-spacing:-0.08px;">工资</span>
<span class="t" style="left:943.1px;top:3030.7px;height:24px;line-height:24px;font-size:17.3px;color:#1f1f1f;">/</span>
<span class="t" style="left:1024.8px;top:3030.7px;height:24px;line-height:24px;font-size:17.3px;color:#1f1f1f;letter-spacing:-0.08px;">收入</span>
<span class="t" style="left:1117.2px;top:3030.7px;height:24px;line-height:24px;font-size:17.3px;color:#1f1f1f;">47</span>
<span class="t" style="left:1193.8px;top:3030.7px;height:24px;line-height:24px;font-size:17.3px;color:#1f1f1f;">13</span>
<span class="t" style="left:1342.3px;top:3030.7px;height:24px;line-height:24px;font-size:17.3px;color:#1f1f1f;">P</span>
<span class="t" style="left:167.0px;top:3069.6px;height:24px;line-height:24px;font-size:17.3px;color:#1f1f1f;letter-spacing:0.05px;">2048/1/1</span>
<span class="t" style="left:645.0px;top:3069.6px;height:24px;line-height:24px;font-size:17.3px;color:#1f1f1f;letter-spacing:-0.49px;">0.00</span>
<span class="t" style="left:819.6px;top:3069.6px;height:24px;line-height:24px;font-size:17.3px;color:#1f1f1f;letter-spacing:-0.08px;">现金</span>
<span class="t" style="left:943.1px;top:3069.6px;height:24px;line-height:24px;font-size:17.3px;color:#1f1f1f;">/</span>
<span class="t" style="left:1024.8px;top:3069.6px;height:24px;line-height:24px;font-size:17.3px;color:#1f1f1f;letter-spacing:-0.08px;">资产</span>
<span class="t" style="left:1117.2px;top:3069.6px;height:24px;line-height:24px;font-size:17.3px;color:#1f1f1f;">47</span>
<span class="t" style="left:1193.8px;top:3069.6px;height:24px;line-height:24px;font-size:17.3px;color:#1f1f1f;">13</span>
<span class="t" style="left:1342.3px;top:3069.6px;height:24px;line-height:24px;font-size:17.3px;color:#1f1f1f;">P</span>
<span class="t" style="left:167.0px;top:3108.4px;height:24px;line-height:24px;font-size:17.3px;color:#1f1f1f;letter-spacing:0.05px;">2048/1/2</span>
<span class="t" style="left:383.5px;top:3108.4px;height:24px;line-height:24px;font-size:17.3px;color:#1f1f1f;letter-spacing:0.30px;">cloudlet.info</span>
<span class="t" style="left:618.5px;top:3108.4px;height:24px;line-height:24px;font-size:17.3px;color:#1f1f1f;letter-spacing:-0.43px;">100000.00</span>
<span class="t" style="left:819.6px;top:3108.4px;height:24px;line-height:24px;font-size:17.3px;color:#1f1f1f;letter-spacing:-0.08px;">域名</span>
<span class="t" style="left:928.8px;top:3108.4px;height:24px;line-height:24px;font-size:17.3px;color:#1f1f1f;letter-spacing:-0.08px;">其他</span>
<span class="t" style="left:1024.8px;top:3108.4px;height:24px;line-height:24px;font-size:17.3px;color:#1f1f1f;letter-spacing:-0.08px;">支出</span>
<span class="t" style="left:1117.2px;top:3108.4px;height:24px;line-height:24px;font-size:17.3px;color:#1f1f1f;">47</span>
<span class="t" style="left:1193.8px;top:3108.4px;height:24px;line-height:24px;font-size:17.3px;color:#1f1f1f;">13</span>
<span class="t" style="left:1342.3px;top:3108.4px;height:24px;line-height:24px;font-size:17.3px;color:#1f1f1f;">P</span>
<span class="t" style="left:167.0px;top:3147.3px;height:24px;line-height:24px;font-size:17.3px;color:#1f1f1f;letter-spacing:0.05px;">2048/1/2</span>
<span class="t" style="left:383.5px;top:3147.3px;height:24px;line-height:24px;font-size:17.3px;color:#1f1f1f;letter-spacing:0.30px;">cloudlet.info</span>
<span class="t" style="left:614.8px;top:3147.3px;height:24px;line-height:24px;font-size:17.3px;color:#1f1f1f;letter-spacing:-0.24px;">-100000.00</span>
<span class="t" style="left:819.6px;top:3147.3px;height:24px;line-height:24px;font-size:17.3px;color:#1f1f1f;letter-spacing:-0.08px;">现金</span>
<span class="t" style="left:943.1px;top:3147.3px;height:24px;line-height:24px;font-size:17.3px;color:#1f1f1f;">/</span>
<span class="t" style="left:1024.8px;top:3147.3px;height:24px;line-height:24px;font-size:17.3px;color:#1f1f1f;letter-spacing:-0.08px;">资产</span>
<span class="t" style="left:1117.2px;top:3147.3px;height:24px;line-height:24px;font-size:17.3px;color:#1f1f1f;">47</span>
<span class="t" style="left:1193.8px;top:3147.3px;height:24px;line-height:24px;font-size:17.3px;color:#1f1f1f;">13</span>
<span class="t" style="left:1342.3px;top:3147.3px;height:24px;line-height:24px;font-size:17.3px;color:#1f1f1f;">P</span>
<div class="b" style="left:719px;top:2828.41px;width:58px;height:40.87px;border:2.400px solid #1a8a5e;"></div>
<div class="b" style="left:773.5px;top:2865.28px;width:6px;height:6px;background:#1a8a5e;border:1px solid #fff;"></div>
<div class="b" style="left:2739px;top:2595px;width:22px;height:1137px;background:#ededed;"></div>
<div class="b" style="left:2742px;top:2604.5px;width:15px;height:1.5px;background:#bdbdbd;"></div>
<svg class="b" style="left:2745px;top:2618px" width="10" height="8" viewBox="0 0 10 8"><path d="M5 0.500L9.500 7.500H0.500z" fill="#8a8a8a"/></svg>
<div class="b" style="left:2744px;top:2644px;width:10px;height:57px;background:#cdcdcd;border-radius:5px;"></div>
<svg class="b" style="left:2745px;top:3713px" width="10" height="8" viewBox="0 0 10 8"><path d="M5 7.500L9.500 0.500H0.500z" fill="#8a8a8a"/></svg>
<div class="b" style="left:0px;top:3732px;width:2761px;height:36px;background:#e7e7e7;"></div>
<div class="b" style="left:0px;top:3767px;width:2761px;height:33px;background:#e9e9e9;"></div>
<svg class="b" style="left:16px;top:3740.5px;" width="19" height="19" viewBox="0 0 22 22" fill="none" stroke="#8f8f8f" stroke-width="1.5" stroke-linecap="round" stroke-linejoin="round"><path d="M13 5L7.500 11L13 17M5 5V17"/></svg>
<svg class="b" style="left:45.5px;top:3740.5px;" width="19" height="19" viewBox="0 0 22 22" fill="none" stroke="#8f8f8f" stroke-width="1.5" stroke-linecap="round" stroke-linejoin="round"><path d="M13.500 5L8 11L13.500 17"/></svg>
<svg class="b" style="left:75.5px;top:3740.5px;" width="19" height="19" viewBox="0 0 22 22" fill="none" stroke="#8f8f8f" stroke-width="1.5" stroke-linecap="round" stroke-linejoin="round"><path d="M8.500 5L14 11L8.500 17"/></svg>
<svg class="b" style="left:104.5px;top:3740.5px;" width="19" height="19" viewBox="0 0 22 22" fill="none" stroke="#8f8f8f" stroke-width="1.5" stroke-linecap="round" stroke-linejoin="round"><path d="M9 5L14.500 11L9 17M17 5V17"/></svg>
<div class="b" style="left:244.7px;top:3732px;width:82.3px;height:33px;background:#fff;border-radius:0 0 7px 7px;"></div>
<span class="t" style="left:153.0px;top:3740.5px;height:22px;line-height:22px;font-size:15.5px;color:#333;letter-spacing:0.48px;">Accounts</span>
<span class="t" style="left:257.0px;top:3740.5px;height:22px;line-height:22px;font-size:15.5px;color:#0a8f6a;font-weight:700;letter-spacing:-0.75px;">Ledger</span>
<span class="t" style="left:344.0px;top:3740.5px;height:22px;line-height:22px;font-size:15.5px;color:#333;letter-spacing:0.42px;">Reports</span>
<span class="t" style="left:438.0px;top:3740.5px;height:22px;line-height:22px;font-size:15.5px;color:#333;letter-spacing:0.04px;">Expense</span>
<span class="t" style="left:537.0px;top:3740.5px;height:22px;line-height:22px;font-size:15.5px;color:#333;letter-spacing:0.19px;">Income</span>
<span class="t" style="left:628.0px;top:3740.5px;height:22px;line-height:22px;font-size:15.5px;color:#333;letter-spacing:0.13px;">AssetsFlow</span>
<span class="t" style="left:746.0px;top:3740.5px;height:22px;line-height:22px;font-size:15.5px;color:#333;letter-spacing:0.25px;">Budget</span>
<span class="t" style="left:836.0px;top:3740.5px;height:22px;line-height:22px;font-size:15.5px;color:#333;letter-spacing:0.08px;">Check</span>
<div class="b" style="left:422px;top:3741px;width:1px;height:19px;background:#cfcfcf;"></div>
<div class="b" style="left:520px;top:3741px;width:1px;height:19px;background:#cfcfcf;"></div>
<div class="b" style="left:612px;top:3741px;width:1px;height:19px;background:#cfcfcf;"></div>
<div class="b" style="left:731px;top:3741px;width:1px;height:19px;background:#cfcfcf;"></div>
<div class="b" style="left:820px;top:3741px;width:1px;height:19px;background:#cfcfcf;"></div>
<div class="b" style="left:899px;top:3741px;width:1px;height:19px;background:#cfcfcf;"></div>
<svg class="b" style="left:906px;top:3742px;" width="16" height="16" viewBox="0 0 22 22" fill="none" stroke="#333" stroke-width="2.2" stroke-linecap="round" stroke-linejoin="round"><path d="M11 4V18M4 11H18"/></svg>
<div class="b" style="left:1635px;top:3745px;width:1.2px;height:10px;background:#9a9a9a;"></div>
<svg class="b" style="left:1654px;top:3746px" width="7" height="9" viewBox="0 0 7 9"><path d="M6.500 0.500V8.500L0.500 4.500z" fill="#8a8a8a"/></svg>
<div class="b" style="left:1674px;top:3745px;width:958px;height:10px;background:#c9c9c9;border-radius:5px;"></div>
<svg class="b" style="left:2708px;top:3746px" width="7" height="9" viewBox="0 0 7 9"><path d="M0.500 0.500V8.500L6.500 4.500z" fill="#8a8a8a"/></svg>
<div class="b" style="left:2732px;top:3745px;width:1.2px;height:10px;background:#9a9a9a;"></div>
<svg class="b" style="left:21px;top:3773.5px;" width="20" height="20" viewBox="0 0 22 22" fill="none" stroke="#555" stroke-width="1.4" stroke-linecap="round" stroke-linejoin="round"><path d="M3 3V9H6.500V3M9 3V6H12.500V3M15.500 3H19V9H15.500M6.500 12H15.500V19H6.500zM9 12V9M13 12V9"/></svg>
<svg class="b" style="left:66px;top:3773.5px;" width="20" height="20" viewBox="0 0 22 22" fill="none" stroke="#555" stroke-width="1.4" stroke-linecap="round" stroke-linejoin="round"><path d="M18.500 3.500H3.500V18.500H18.500M9 8H18.500M9 11.500H18.500M9 15H18.500"/></svg>
<svg class="b" style="left:2082.6px;top:3772.5px;" width="22" height="22" viewBox="0 0 22 22" fill="none" stroke="#555" stroke-width="1.3" stroke-linecap="round" stroke-linejoin="round"><rect x="3" y="3.500" width="15" height="14"/><path d="M3 8H18M3 12.500H12M8 3.500V17.500"/><circle cx="16" cy="16" r="3.500" fill="#e9e9e9"/><circle cx="16" cy="16" r="1"/></svg>
<svg class="b" style="left:2126px;top:3772.5px;" width="22" height="22" viewBox="0 0 22 22" fill="none" stroke="#555" stroke-width="1.3" stroke-linecap="round" stroke-linejoin="round"><path d="M2.500 11C5 6.500 8 5 11 5S17 6.500 19.500 11C17 15.500 14 17 11 17S5 15.500 2.500 11z"/><circle cx="11" cy="11" r="2.800"/></svg>
<svg class="b" style="left:2173px;top:3773.5px;" width="20" height="20" viewBox="0 0 22 22" fill="none" stroke="#555" stroke-width="1.3" stroke-linecap="round" stroke-linejoin="round"><rect x="8" y="3" width="6" height="16" rx="1"/><rect x="3" y="8" width="16" height="6" rx="1"/></svg>
<svg class="b" style="left:2198.5px;top:3780.5px" width="9" height="7" viewBox="0 0 9 7"><path d="M1.500 1.800L4.500 4.800L7.500 1.800" fill="none" stroke="#555" stroke-width="1.700" stroke-linecap="round" stroke-linejoin="round"/></svg>
<div class="b" style="left:2228px;top:3774px;width:1px;height:19px;background:#cfcfcf;"></div>
<div class="b" style="left:2241px;top:3769px;width:29px;height:29px;background:#d9d9d9;border-radius:4px;"></div>
<svg class="b" style="left:2245.5px;top:3773.5px;" width="20" height="20" viewBox="0 0 22 22" fill="none" stroke="#444" stroke-width="1.4" stroke-linecap="round" stroke-linejoin="round"><rect x="3.500" y="3.500" width="15" height="15" rx="1.500"/><path d="M3.500 8.500H18.500M8.500 8.500V18.500"/></svg>
<svg class="b" style="left:2288px;top:3773.5px;" width="20" height="20" viewBox="0 0 22 22" fill="none" stroke="#555" stroke-width="1.4" stroke-linecap="round" stroke-linejoin="round"><rect x="3.500" y="3.500" width="15" height="15" rx="1.500"/><path d="M11 3.500V18.500"/></svg>
<svg class="b" style="left:2331px;top:3773.5px;" width="20" height="20" viewBox="0 0 22 22" fill="none" stroke="#555" stroke-width="1.4" stroke-linecap="round" stroke-linejoin="round"><rect x="3.500" y="3.500" width="15" height="11" rx="1.500"/><path d="M3.500 18.500H14M18.500 17V18.500H17"/></svg>
<div class="b" style="left:2365px;top:3774px;width:1px;height:19px;background:#cfcfcf;"></div>
<span class="t" style="left:2391.0px;top:3772.5px;height:22px;line-height:22px;font-size:15.5px;color:#444;letter-spacing:-0.44px;">100%</span>
<svg class="b" style="left:2447.5px;top:3780.5px" width="9" height="7" viewBox="0 0 9 7"><path d="M1.500 1.800L4.500 4.800L7.500 1.800" fill="none" stroke="#555" stroke-width="1.700" stroke-linecap="round" stroke-linejoin="round"/></svg>
<div class="b" style="left:2480px;top:3782.5px;width:15px;height:2.2px;background:#333;"></div>
<div class="b" style="left:2516px;top:3783px;width:70px;height:1.6px;background:#3a6fc4;"></div>
<div class="b" style="left:2581px;top:3757px;width:173px;height:41px;background:#fff;border-radius:9px;box-shadow:0 0 4px rgba(0,0,0,.25)"></div>
<svg class="b" style="left:2590px;top:3765px" width="28" height="26" viewBox="0 0 32 30"><path d="M27 6C22 3 10 3 8 9C6.500 15 26 12 24 20C22 26 9 26 4 22" fill="none" stroke="#f2701d" stroke-width="5" stroke-linecap="round"/></svg>
<div class="b" style="left:2629px;top:3766px;width:1px;height:26px;background:#e4e4e4;"></div>
<span class="t" style="left:2639.5px;top:3760.5px;height:35px;line-height:35px;font-size:25px;color:#111;font-family:'Noto Sans CJK SC',sans-serif;font-weight:500;">中</span>
<svg class="b" style="left:2679px;top:3765px" width="26" height="26" viewBox="0 0 26 26"><path d="M13 3A10.500 10.500 0 1 1 3.500 17.500A8.500 8.500 0 0 0 13 3z" fill="none" stroke="#222" stroke-width="2.200" stroke-linejoin="round"/></svg>
<svg class="b" style="left:2716px;top:3766px" width="24" height="26" viewBox="0 0 24 26"><circle cx="7.500" cy="7" r="3.200" fill="none" stroke="#222" stroke-width="2"/><path d="M15.500 14.500A2.500 2.500 0 1 1 17 19C17 21 16 22.500 14.500 23.500" fill="#222" stroke="#222" stroke-width="1.500"/></svg>
<div class="b" style="left:0px;top:0px;width:2761px;height:1px;background:#fff;"></div>
<div class="b" style="left:0px;top:0px;width:1px;height:2310px;background:#fff;"></div>
</body></html>
